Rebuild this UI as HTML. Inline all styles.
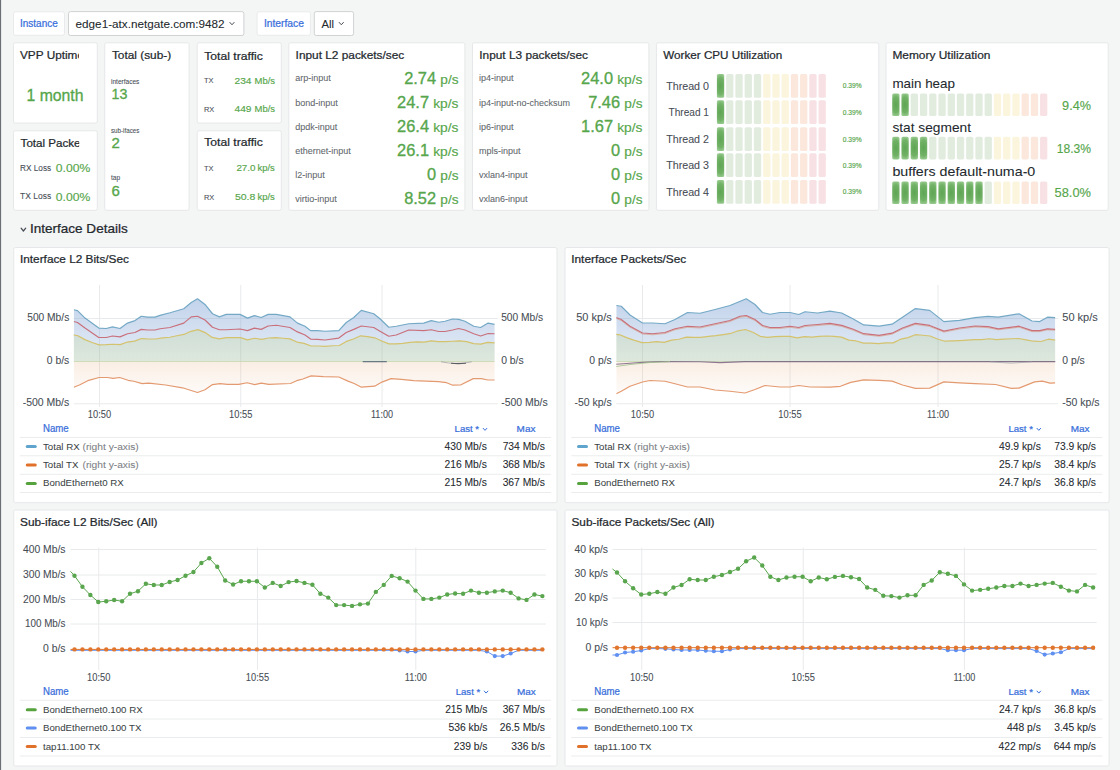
<!DOCTYPE html><html><head><meta charset="utf-8"><style>html,body{margin:0;padding:0;background:#f4f5f5;}svg{display:block;font-family:"Liberation Sans", sans-serif;}</style></head><body>
<svg width="1120" height="770" viewBox="0 0 1120 770">
<rect x="0" y="0" width="1120" height="770" fill="#f4f5f5"/>
<rect x="0" y="0" width="1.1" height="770" fill="#6c6f74"/>
<rect x="13.5" y="11.8" width="51" height="23.5" rx="2" fill="#fff" stroke="#e9eaeb" stroke-width="1"/>
<text x="20.00" y="26.90" font-size="10" fill="#3a6fdb" textLength="37.75" lengthAdjust="spacingAndGlyphs" stroke="#3a6fdb" stroke-width="0.24">Instance</text>
<rect x="68.5" y="11.6" width="175.4" height="23.9" rx="2" fill="#fff" stroke="#cfd1d3" stroke-width="1"/>
<text x="75.60" y="27.80" font-size="11" fill="#24292e" textLength="149.00" lengthAdjust="spacingAndGlyphs" stroke="#24292e" stroke-width="0.07">edge1-atx.netgate.com:9482</text>
<path d="M229.90 22.45 L232.00 24.75 L234.10 22.45" fill="none" stroke="#464c54" stroke-width="1.0" stroke-linecap="round" stroke-linejoin="round"/>
<rect x="257.1" y="11.8" width="53.3" height="23.5" rx="2" fill="#fff" stroke="#e9eaeb" stroke-width="1"/>
<text x="263.90" y="26.90" font-size="10" fill="#3a6fdb" textLength="40.00" lengthAdjust="spacingAndGlyphs" stroke="#3a6fdb" stroke-width="0.24">Interface</text>
<rect x="314.3" y="11.6" width="39.3" height="23.9" rx="2" fill="#fff" stroke="#cfd1d3" stroke-width="1"/>
<text x="321.40" y="27.80" font-size="11" fill="#24292e" textLength="12.50" lengthAdjust="spacingAndGlyphs" stroke="#24292e" stroke-width="0.07">All</text>
<path d="M339.20 22.45 L341.30 24.75 L343.40 22.45" fill="none" stroke="#464c54" stroke-width="1.0" stroke-linecap="round" stroke-linejoin="round"/>
<rect x="13.50" y="42.80" width="83.80" height="80.30" rx="1.8" fill="#ffffff" stroke="#e6e7e9" stroke-width="1"/>
<clipPath id="c_vpp"><rect x="14" y="43" width="65" height="30"/></clipPath>
<text x="20.00" y="59.40" font-size="11.8" fill="#24292e" textLength="64.00" lengthAdjust="spacingAndGlyphs" clip-path="url(#c_vpp)" stroke="#24292e" stroke-width="0.24">VPP Uptime</text>
<text x="26.50" y="101.00" font-size="17" fill="#56a64b" textLength="57.00" lengthAdjust="spacingAndGlyphs" stroke="#56a64b" stroke-width="0.32">1 month</text>
<rect x="13.50" y="130.80" width="83.80" height="79.50" rx="1.8" fill="#ffffff" stroke="#e6e7e9" stroke-width="1"/>
<clipPath id="c_tp"><rect x="14" y="131" width="65.2" height="30"/></clipPath>
<text x="20.60" y="146.50" font-size="11.8" fill="#24292e" textLength="69.00" lengthAdjust="spacingAndGlyphs" clip-path="url(#c_tp)" stroke="#24292e" stroke-width="0.24">Total Packets</text>
<text x="20.00" y="170.60" font-size="8.5" fill="#464c54" textLength="31.20" lengthAdjust="spacingAndGlyphs" stroke="#464c54" stroke-width="0.07">RX Loss</text>
<text x="55.80" y="172.00" font-size="11.5" fill="#56a64b" textLength="34.40" lengthAdjust="spacingAndGlyphs" stroke="#56a64b" stroke-width="0.15">0.00%</text>
<text x="20.00" y="198.80" font-size="8.5" fill="#464c54" textLength="31.20" lengthAdjust="spacingAndGlyphs" stroke="#464c54" stroke-width="0.07">TX Loss</text>
<text x="55.80" y="200.90" font-size="11.5" fill="#56a64b" textLength="34.40" lengthAdjust="spacingAndGlyphs" stroke="#56a64b" stroke-width="0.15">0.00%</text>
<rect x="104.75" y="42.80" width="84.35" height="167.50" rx="1.8" fill="#ffffff" stroke="#e6e7e9" stroke-width="1"/>
<clipPath id="c_ts"><rect x="105" y="43" width="66.2" height="30"/></clipPath>
<text x="111.90" y="59.20" font-size="11.8" fill="#24292e" textLength="110.70" lengthAdjust="spacingAndGlyphs" clip-path="url(#c_ts)" stroke="#24292e" stroke-width="0.24">Total (sub-)interfaces</text>
<text x="111.00" y="83.75" font-size="6.6" fill="#464c54" textLength="28.40" lengthAdjust="spacingAndGlyphs" stroke="#464c54" stroke-width="0.07">interfaces</text>
<text x="111.50" y="99.40" font-size="15" fill="#56a64b" textLength="15.80" lengthAdjust="spacingAndGlyphs" stroke="#56a64b" stroke-width="0.32">13</text>
<text x="111.00" y="132.70" font-size="6.6" fill="#464c54" textLength="28.40" lengthAdjust="spacingAndGlyphs" stroke="#464c54" stroke-width="0.07">sub-ifaces</text>
<text x="111.50" y="147.90" font-size="15" fill="#56a64b" stroke="#56a64b" stroke-width="0.32">2</text>
<text x="111.00" y="180.20" font-size="6.6" fill="#464c54" stroke="#464c54" stroke-width="0.07">tap</text>
<text x="111.50" y="196.00" font-size="15" fill="#56a64b" stroke="#56a64b" stroke-width="0.32">6</text>
<rect x="197.20" y="42.80" width="84.10" height="80.30" rx="1.8" fill="#ffffff" stroke="#e6e7e9" stroke-width="1"/>
<text x="204.30" y="59.50" font-size="11.8" fill="#24292e" textLength="58.50" lengthAdjust="spacingAndGlyphs" stroke="#24292e" stroke-width="0.24">Total traffic</text>
<text x="204.00" y="83.40" font-size="7.4" fill="#464c54" stroke="#464c54" stroke-width="0.07">TX</text>
<text x="234.50" y="83.80" font-size="9.8" fill="#56a64b" textLength="17.00" lengthAdjust="spacingAndGlyphs" stroke="#56a64b" stroke-width="0.15">234</text>
<text x="254.60" y="83.80" font-size="9" fill="#56a64b" textLength="20.50" lengthAdjust="spacingAndGlyphs" stroke="#56a64b" stroke-width="0.15">Mb/s</text>
<text x="204.00" y="112.10" font-size="7.4" fill="#464c54" stroke="#464c54" stroke-width="0.07">RX</text>
<text x="234.50" y="111.60" font-size="9.8" fill="#56a64b" textLength="17.00" lengthAdjust="spacingAndGlyphs" stroke="#56a64b" stroke-width="0.15">449</text>
<text x="254.60" y="111.60" font-size="9" fill="#56a64b" textLength="20.50" lengthAdjust="spacingAndGlyphs" stroke="#56a64b" stroke-width="0.15">Mb/s</text>
<rect x="197.20" y="130.80" width="84.10" height="79.50" rx="1.8" fill="#ffffff" stroke="#e6e7e9" stroke-width="1"/>
<text x="204.30" y="146.40" font-size="11.8" fill="#24292e" textLength="58.50" lengthAdjust="spacingAndGlyphs" stroke="#24292e" stroke-width="0.24">Total traffic</text>
<text x="204.00" y="170.50" font-size="7.4" fill="#464c54" stroke="#464c54" stroke-width="0.07">TX</text>
<text x="236.40" y="171.10" font-size="9.8" fill="#56a64b" textLength="19.20" lengthAdjust="spacingAndGlyphs" stroke="#56a64b" stroke-width="0.15">27.0</text>
<text x="257.50" y="171.10" font-size="8.6" fill="#56a64b" textLength="17.30" lengthAdjust="spacingAndGlyphs" stroke="#56a64b" stroke-width="0.15">kp/s</text>
<text x="204.00" y="199.50" font-size="7.4" fill="#464c54" stroke="#464c54" stroke-width="0.07">RX</text>
<text x="234.90" y="199.50" font-size="9.8" fill="#56a64b" textLength="20.50" lengthAdjust="spacingAndGlyphs" stroke="#56a64b" stroke-width="0.15">50.8</text>
<text x="257.50" y="199.50" font-size="8.6" fill="#56a64b" textLength="17.30" lengthAdjust="spacingAndGlyphs" stroke="#56a64b" stroke-width="0.15">kp/s</text>
<rect x="288.80" y="42.80" width="176.10" height="167.50" rx="1.8" fill="#ffffff" stroke="#e6e7e9" stroke-width="1"/>
<text x="295.60" y="59.20" font-size="11.8" fill="#24292e" textLength="108.70" lengthAdjust="spacingAndGlyphs" stroke="#24292e" stroke-width="0.24">Input L2 packets/sec</text>
<text x="295.30" y="81.40" font-size="9" fill="#62676c" stroke="#62676c" stroke-width="0.07">arp-input</text>
<text x="440.30" y="84.00" font-size="12.5" fill="#56a64b" textLength="18.20" lengthAdjust="spacingAndGlyphs" stroke="#56a64b" stroke-width="0.15">p/s</text>
<text x="436.10" y="84.00" font-size="16.4" fill="#56a64b" text-anchor="end" stroke="#56a64b" stroke-width="0.32">2.74</text>
<text x="295.30" y="105.50" font-size="9" fill="#62676c" stroke="#62676c" stroke-width="0.07">bond-input</text>
<text x="433.20" y="108.10" font-size="12.5" fill="#56a64b" textLength="25.30" lengthAdjust="spacingAndGlyphs" stroke="#56a64b" stroke-width="0.15">kp/s</text>
<text x="429.00" y="108.10" font-size="16.4" fill="#56a64b" text-anchor="end" stroke="#56a64b" stroke-width="0.32">24.7</text>
<text x="295.30" y="129.80" font-size="9" fill="#62676c" stroke="#62676c" stroke-width="0.07">dpdk-input</text>
<text x="433.20" y="132.40" font-size="12.5" fill="#56a64b" textLength="25.30" lengthAdjust="spacingAndGlyphs" stroke="#56a64b" stroke-width="0.15">kp/s</text>
<text x="429.00" y="132.40" font-size="16.4" fill="#56a64b" text-anchor="end" stroke="#56a64b" stroke-width="0.32">26.4</text>
<text x="295.30" y="153.70" font-size="9" fill="#62676c" stroke="#62676c" stroke-width="0.07">ethernet-input</text>
<text x="433.20" y="156.30" font-size="12.5" fill="#56a64b" textLength="25.30" lengthAdjust="spacingAndGlyphs" stroke="#56a64b" stroke-width="0.15">kp/s</text>
<text x="429.00" y="156.30" font-size="16.4" fill="#56a64b" text-anchor="end" stroke="#56a64b" stroke-width="0.32">26.1</text>
<text x="295.30" y="177.50" font-size="9" fill="#62676c" stroke="#62676c" stroke-width="0.07">l2-input</text>
<text x="440.30" y="180.10" font-size="12.5" fill="#56a64b" textLength="18.20" lengthAdjust="spacingAndGlyphs" stroke="#56a64b" stroke-width="0.15">p/s</text>
<text x="436.10" y="180.10" font-size="16.4" fill="#56a64b" text-anchor="end" stroke="#56a64b" stroke-width="0.32">0</text>
<text x="295.30" y="201.60" font-size="9" fill="#62676c" stroke="#62676c" stroke-width="0.07">virtio-input</text>
<text x="440.30" y="204.20" font-size="12.5" fill="#56a64b" textLength="18.20" lengthAdjust="spacingAndGlyphs" stroke="#56a64b" stroke-width="0.15">p/s</text>
<text x="436.10" y="204.20" font-size="16.4" fill="#56a64b" text-anchor="end" stroke="#56a64b" stroke-width="0.32">8.52</text>
<rect x="472.50" y="42.80" width="176.40" height="167.50" rx="1.8" fill="#ffffff" stroke="#e6e7e9" stroke-width="1"/>
<text x="479.30" y="59.20" font-size="11.8" fill="#24292e" textLength="108.70" lengthAdjust="spacingAndGlyphs" stroke="#24292e" stroke-width="0.24">Input L3 packets/sec</text>
<text x="479.00" y="81.40" font-size="9" fill="#62676c" stroke="#62676c" stroke-width="0.07">ip4-input</text>
<text x="617.20" y="84.00" font-size="12.5" fill="#56a64b" textLength="25.30" lengthAdjust="spacingAndGlyphs" stroke="#56a64b" stroke-width="0.15">kp/s</text>
<text x="613.00" y="84.00" font-size="16.4" fill="#56a64b" text-anchor="end" stroke="#56a64b" stroke-width="0.32">24.0</text>
<text x="479.00" y="105.50" font-size="9" fill="#62676c" stroke="#62676c" stroke-width="0.07">ip4-input-no-checksum</text>
<text x="624.30" y="108.10" font-size="12.5" fill="#56a64b" textLength="18.20" lengthAdjust="spacingAndGlyphs" stroke="#56a64b" stroke-width="0.15">p/s</text>
<text x="620.10" y="108.10" font-size="16.4" fill="#56a64b" text-anchor="end" stroke="#56a64b" stroke-width="0.32">7.46</text>
<text x="479.00" y="129.80" font-size="9" fill="#62676c" stroke="#62676c" stroke-width="0.07">ip6-input</text>
<text x="617.20" y="132.40" font-size="12.5" fill="#56a64b" textLength="25.30" lengthAdjust="spacingAndGlyphs" stroke="#56a64b" stroke-width="0.15">kp/s</text>
<text x="613.00" y="132.40" font-size="16.4" fill="#56a64b" text-anchor="end" stroke="#56a64b" stroke-width="0.32">1.67</text>
<text x="479.00" y="153.70" font-size="9" fill="#62676c" stroke="#62676c" stroke-width="0.07">mpls-input</text>
<text x="624.30" y="156.30" font-size="12.5" fill="#56a64b" textLength="18.20" lengthAdjust="spacingAndGlyphs" stroke="#56a64b" stroke-width="0.15">p/s</text>
<text x="620.10" y="156.30" font-size="16.4" fill="#56a64b" text-anchor="end" stroke="#56a64b" stroke-width="0.32">0</text>
<text x="479.00" y="177.50" font-size="9" fill="#62676c" stroke="#62676c" stroke-width="0.07">vxlan4-input</text>
<text x="624.30" y="180.10" font-size="12.5" fill="#56a64b" textLength="18.20" lengthAdjust="spacingAndGlyphs" stroke="#56a64b" stroke-width="0.15">p/s</text>
<text x="620.10" y="180.10" font-size="16.4" fill="#56a64b" text-anchor="end" stroke="#56a64b" stroke-width="0.32">0</text>
<text x="479.00" y="201.60" font-size="9" fill="#62676c" stroke="#62676c" stroke-width="0.07">vxlan6-input</text>
<text x="624.30" y="204.20" font-size="12.5" fill="#56a64b" textLength="18.20" lengthAdjust="spacingAndGlyphs" stroke="#56a64b" stroke-width="0.15">p/s</text>
<text x="620.10" y="204.20" font-size="16.4" fill="#56a64b" text-anchor="end" stroke="#56a64b" stroke-width="0.32">0</text>
<rect x="656.40" y="42.80" width="222.40" height="167.50" rx="1.8" fill="#ffffff" stroke="#e6e7e9" stroke-width="1"/>
<text x="663.30" y="59.20" font-size="11.8" fill="#24292e" textLength="119.00" lengthAdjust="spacingAndGlyphs" stroke="#24292e" stroke-width="0.24">Worker CPU Utilization</text>
<defs><radialGradient id="gfill" cx="0.5" cy="0.5" r="0.5" fx="0.5" fy="0.5" gradientTransform="translate(0.5 0.5) scale(1.6 1) translate(-0.5 -0.5)"><stop offset="0" stop-color="#5ea554"/><stop offset="0.7" stop-color="#72b267"/><stop offset="1" stop-color="#94c88b"/></radialGradient></defs>
<rect x="716.90" y="74.00" width="7.3" height="23.80" rx="1.6" fill="url(#gfill)"/>
<rect x="726.14" y="74.00" width="7.3" height="23.80" rx="1.6" fill="#e1ecdf"/>
<rect x="735.38" y="74.00" width="7.3" height="23.80" rx="1.6" fill="#e1ecdf"/>
<rect x="744.62" y="74.00" width="7.3" height="23.80" rx="1.6" fill="#e1ecdf"/>
<rect x="753.86" y="74.00" width="7.3" height="23.80" rx="1.6" fill="#e1ecdf"/>
<rect x="763.10" y="74.00" width="7.3" height="23.80" rx="1.6" fill="#fbf5dd"/>
<rect x="772.34" y="74.00" width="7.3" height="23.80" rx="1.6" fill="#fbf5dd"/>
<rect x="781.58" y="74.00" width="7.3" height="23.80" rx="1.6" fill="#fbf5dd"/>
<rect x="790.82" y="74.00" width="7.3" height="23.80" rx="1.6" fill="#fbe7dc"/>
<rect x="800.06" y="74.00" width="7.3" height="23.80" rx="1.6" fill="#fbe7dc"/>
<rect x="809.30" y="74.00" width="7.3" height="23.80" rx="1.6" fill="#f8e1e4"/>
<rect x="818.54" y="74.00" width="7.3" height="23.80" rx="1.6" fill="#f8e1e4"/>
<text x="709.00" y="89.50" font-size="10.5" fill="#464c54" text-anchor="end" textLength="42.80" lengthAdjust="spacingAndGlyphs" stroke="#464c54" stroke-width="0.07">Thread 0</text>
<text x="842.80" y="88.30" font-size="6.7" fill="#56a64b" textLength="18.90" lengthAdjust="spacingAndGlyphs" stroke="#56a64b" stroke-width="0.15">0.39%</text>
<rect x="716.90" y="100.20" width="7.3" height="23.80" rx="1.6" fill="url(#gfill)"/>
<rect x="726.14" y="100.20" width="7.3" height="23.80" rx="1.6" fill="#e1ecdf"/>
<rect x="735.38" y="100.20" width="7.3" height="23.80" rx="1.6" fill="#e1ecdf"/>
<rect x="744.62" y="100.20" width="7.3" height="23.80" rx="1.6" fill="#e1ecdf"/>
<rect x="753.86" y="100.20" width="7.3" height="23.80" rx="1.6" fill="#e1ecdf"/>
<rect x="763.10" y="100.20" width="7.3" height="23.80" rx="1.6" fill="#fbf5dd"/>
<rect x="772.34" y="100.20" width="7.3" height="23.80" rx="1.6" fill="#fbf5dd"/>
<rect x="781.58" y="100.20" width="7.3" height="23.80" rx="1.6" fill="#fbf5dd"/>
<rect x="790.82" y="100.20" width="7.3" height="23.80" rx="1.6" fill="#fbe7dc"/>
<rect x="800.06" y="100.20" width="7.3" height="23.80" rx="1.6" fill="#fbe7dc"/>
<rect x="809.30" y="100.20" width="7.3" height="23.80" rx="1.6" fill="#f8e1e4"/>
<rect x="818.54" y="100.20" width="7.3" height="23.80" rx="1.6" fill="#f8e1e4"/>
<text x="709.00" y="115.70" font-size="10.5" fill="#464c54" text-anchor="end" textLength="40.50" lengthAdjust="spacingAndGlyphs" stroke="#464c54" stroke-width="0.07">Thread 1</text>
<text x="842.80" y="114.50" font-size="6.7" fill="#56a64b" textLength="18.90" lengthAdjust="spacingAndGlyphs" stroke="#56a64b" stroke-width="0.15">0.39%</text>
<rect x="716.90" y="127.20" width="7.3" height="23.80" rx="1.6" fill="url(#gfill)"/>
<rect x="726.14" y="127.20" width="7.3" height="23.80" rx="1.6" fill="#e1ecdf"/>
<rect x="735.38" y="127.20" width="7.3" height="23.80" rx="1.6" fill="#e1ecdf"/>
<rect x="744.62" y="127.20" width="7.3" height="23.80" rx="1.6" fill="#e1ecdf"/>
<rect x="753.86" y="127.20" width="7.3" height="23.80" rx="1.6" fill="#e1ecdf"/>
<rect x="763.10" y="127.20" width="7.3" height="23.80" rx="1.6" fill="#fbf5dd"/>
<rect x="772.34" y="127.20" width="7.3" height="23.80" rx="1.6" fill="#fbf5dd"/>
<rect x="781.58" y="127.20" width="7.3" height="23.80" rx="1.6" fill="#fbf5dd"/>
<rect x="790.82" y="127.20" width="7.3" height="23.80" rx="1.6" fill="#fbe7dc"/>
<rect x="800.06" y="127.20" width="7.3" height="23.80" rx="1.6" fill="#fbe7dc"/>
<rect x="809.30" y="127.20" width="7.3" height="23.80" rx="1.6" fill="#f8e1e4"/>
<rect x="818.54" y="127.20" width="7.3" height="23.80" rx="1.6" fill="#f8e1e4"/>
<text x="709.00" y="142.70" font-size="10.5" fill="#464c54" text-anchor="end" textLength="42.80" lengthAdjust="spacingAndGlyphs" stroke="#464c54" stroke-width="0.07">Thread 2</text>
<text x="842.80" y="141.50" font-size="6.7" fill="#56a64b" textLength="18.90" lengthAdjust="spacingAndGlyphs" stroke="#56a64b" stroke-width="0.15">0.39%</text>
<rect x="716.90" y="153.30" width="7.3" height="23.80" rx="1.6" fill="url(#gfill)"/>
<rect x="726.14" y="153.30" width="7.3" height="23.80" rx="1.6" fill="#e1ecdf"/>
<rect x="735.38" y="153.30" width="7.3" height="23.80" rx="1.6" fill="#e1ecdf"/>
<rect x="744.62" y="153.30" width="7.3" height="23.80" rx="1.6" fill="#e1ecdf"/>
<rect x="753.86" y="153.30" width="7.3" height="23.80" rx="1.6" fill="#e1ecdf"/>
<rect x="763.10" y="153.30" width="7.3" height="23.80" rx="1.6" fill="#fbf5dd"/>
<rect x="772.34" y="153.30" width="7.3" height="23.80" rx="1.6" fill="#fbf5dd"/>
<rect x="781.58" y="153.30" width="7.3" height="23.80" rx="1.6" fill="#fbf5dd"/>
<rect x="790.82" y="153.30" width="7.3" height="23.80" rx="1.6" fill="#fbe7dc"/>
<rect x="800.06" y="153.30" width="7.3" height="23.80" rx="1.6" fill="#fbe7dc"/>
<rect x="809.30" y="153.30" width="7.3" height="23.80" rx="1.6" fill="#f8e1e4"/>
<rect x="818.54" y="153.30" width="7.3" height="23.80" rx="1.6" fill="#f8e1e4"/>
<text x="709.00" y="168.80" font-size="10.5" fill="#464c54" text-anchor="end" textLength="42.80" lengthAdjust="spacingAndGlyphs" stroke="#464c54" stroke-width="0.07">Thread 3</text>
<text x="842.80" y="167.60" font-size="6.7" fill="#56a64b" textLength="18.90" lengthAdjust="spacingAndGlyphs" stroke="#56a64b" stroke-width="0.15">0.39%</text>
<rect x="716.90" y="180.00" width="7.3" height="23.80" rx="1.6" fill="url(#gfill)"/>
<rect x="726.14" y="180.00" width="7.3" height="23.80" rx="1.6" fill="#e1ecdf"/>
<rect x="735.38" y="180.00" width="7.3" height="23.80" rx="1.6" fill="#e1ecdf"/>
<rect x="744.62" y="180.00" width="7.3" height="23.80" rx="1.6" fill="#e1ecdf"/>
<rect x="753.86" y="180.00" width="7.3" height="23.80" rx="1.6" fill="#e1ecdf"/>
<rect x="763.10" y="180.00" width="7.3" height="23.80" rx="1.6" fill="#fbf5dd"/>
<rect x="772.34" y="180.00" width="7.3" height="23.80" rx="1.6" fill="#fbf5dd"/>
<rect x="781.58" y="180.00" width="7.3" height="23.80" rx="1.6" fill="#fbf5dd"/>
<rect x="790.82" y="180.00" width="7.3" height="23.80" rx="1.6" fill="#fbe7dc"/>
<rect x="800.06" y="180.00" width="7.3" height="23.80" rx="1.6" fill="#fbe7dc"/>
<rect x="809.30" y="180.00" width="7.3" height="23.80" rx="1.6" fill="#f8e1e4"/>
<rect x="818.54" y="180.00" width="7.3" height="23.80" rx="1.6" fill="#f8e1e4"/>
<text x="709.00" y="195.50" font-size="10.5" fill="#464c54" text-anchor="end" textLength="42.80" lengthAdjust="spacingAndGlyphs" stroke="#464c54" stroke-width="0.07">Thread 4</text>
<text x="842.80" y="194.30" font-size="6.7" fill="#56a64b" textLength="18.90" lengthAdjust="spacingAndGlyphs" stroke="#56a64b" stroke-width="0.15">0.39%</text>
<rect x="886.00" y="42.80" width="222.20" height="167.50" rx="1.8" fill="#ffffff" stroke="#e6e7e9" stroke-width="1"/>
<text x="892.40" y="59.10" font-size="11.8" fill="#24292e" textLength="98.00" lengthAdjust="spacingAndGlyphs" stroke="#24292e" stroke-width="0.24">Memory Utilization</text>
<text x="892.40" y="88.10" font-size="13.3" fill="#24292e" textLength="62.60" lengthAdjust="spacingAndGlyphs" stroke="#24292e" stroke-width="0.07">main heap</text>
<rect x="892.20" y="93.40" width="7.3" height="22.60" rx="1.6" fill="url(#gfill)"/>
<rect x="901.44" y="93.40" width="7.3" height="22.60" rx="1.6" fill="url(#gfill)"/>
<rect x="910.68" y="93.40" width="7.3" height="22.60" rx="1.6" fill="#e1ecdf"/>
<rect x="919.92" y="93.40" width="7.3" height="22.60" rx="1.6" fill="#e1ecdf"/>
<rect x="929.16" y="93.40" width="7.3" height="22.60" rx="1.6" fill="#e1ecdf"/>
<rect x="938.40" y="93.40" width="7.3" height="22.60" rx="1.6" fill="#e1ecdf"/>
<rect x="947.64" y="93.40" width="7.3" height="22.60" rx="1.6" fill="#e1ecdf"/>
<rect x="956.88" y="93.40" width="7.3" height="22.60" rx="1.6" fill="#e1ecdf"/>
<rect x="966.12" y="93.40" width="7.3" height="22.60" rx="1.6" fill="#e1ecdf"/>
<rect x="975.36" y="93.40" width="7.3" height="22.60" rx="1.6" fill="#e1ecdf"/>
<rect x="984.60" y="93.40" width="7.3" height="22.60" rx="1.6" fill="#e1ecdf"/>
<rect x="993.84" y="93.40" width="7.3" height="22.60" rx="1.6" fill="#fbf5dd"/>
<rect x="1003.08" y="93.40" width="7.3" height="22.60" rx="1.6" fill="#fbf5dd"/>
<rect x="1012.32" y="93.40" width="7.3" height="22.60" rx="1.6" fill="#fbf5dd"/>
<rect x="1021.56" y="93.40" width="7.3" height="22.60" rx="1.6" fill="#fbe7dc"/>
<rect x="1030.80" y="93.40" width="7.3" height="22.60" rx="1.6" fill="#fbe7dc"/>
<rect x="1040.04" y="93.40" width="7.3" height="22.60" rx="1.6" fill="#f8e1e4"/>
<text x="1062.10" y="109.50" font-size="13" fill="#56a64b" textLength="28.90" lengthAdjust="spacingAndGlyphs" stroke="#56a64b" stroke-width="0.15">9.4%</text>
<text x="892.40" y="132.00" font-size="13.3" fill="#24292e" textLength="78.60" lengthAdjust="spacingAndGlyphs" stroke="#24292e" stroke-width="0.07">stat segment</text>
<rect x="892.20" y="136.80" width="7.3" height="22.60" rx="1.6" fill="url(#gfill)"/>
<rect x="901.44" y="136.80" width="7.3" height="22.60" rx="1.6" fill="url(#gfill)"/>
<rect x="910.68" y="136.80" width="7.3" height="22.60" rx="1.6" fill="url(#gfill)"/>
<rect x="919.92" y="136.80" width="7.3" height="22.60" rx="1.6" fill="url(#gfill)"/>
<rect x="929.16" y="136.80" width="7.3" height="22.60" rx="1.6" fill="#e1ecdf"/>
<rect x="938.40" y="136.80" width="7.3" height="22.60" rx="1.6" fill="#e1ecdf"/>
<rect x="947.64" y="136.80" width="7.3" height="22.60" rx="1.6" fill="#e1ecdf"/>
<rect x="956.88" y="136.80" width="7.3" height="22.60" rx="1.6" fill="#e1ecdf"/>
<rect x="966.12" y="136.80" width="7.3" height="22.60" rx="1.6" fill="#e1ecdf"/>
<rect x="975.36" y="136.80" width="7.3" height="22.60" rx="1.6" fill="#e1ecdf"/>
<rect x="984.60" y="136.80" width="7.3" height="22.60" rx="1.6" fill="#e1ecdf"/>
<rect x="993.84" y="136.80" width="7.3" height="22.60" rx="1.6" fill="#fbf5dd"/>
<rect x="1003.08" y="136.80" width="7.3" height="22.60" rx="1.6" fill="#fbf5dd"/>
<rect x="1012.32" y="136.80" width="7.3" height="22.60" rx="1.6" fill="#fbf5dd"/>
<rect x="1021.56" y="136.80" width="7.3" height="22.60" rx="1.6" fill="#fbe7dc"/>
<rect x="1030.80" y="136.80" width="7.3" height="22.60" rx="1.6" fill="#fbe7dc"/>
<rect x="1040.04" y="136.80" width="7.3" height="22.60" rx="1.6" fill="#f8e1e4"/>
<text x="1056.70" y="152.90" font-size="13" fill="#56a64b" textLength="34.30" lengthAdjust="spacingAndGlyphs" stroke="#56a64b" stroke-width="0.15">18.3%</text>
<text x="892.40" y="176.40" font-size="13.3" fill="#24292e" textLength="142.90" lengthAdjust="spacingAndGlyphs" stroke="#24292e" stroke-width="0.07">buffers default-numa-0</text>
<rect x="892.20" y="181.40" width="7.3" height="22.60" rx="1.6" fill="url(#gfill)"/>
<rect x="901.44" y="181.40" width="7.3" height="22.60" rx="1.6" fill="url(#gfill)"/>
<rect x="910.68" y="181.40" width="7.3" height="22.60" rx="1.6" fill="url(#gfill)"/>
<rect x="919.92" y="181.40" width="7.3" height="22.60" rx="1.6" fill="url(#gfill)"/>
<rect x="929.16" y="181.40" width="7.3" height="22.60" rx="1.6" fill="url(#gfill)"/>
<rect x="938.40" y="181.40" width="7.3" height="22.60" rx="1.6" fill="url(#gfill)"/>
<rect x="947.64" y="181.40" width="7.3" height="22.60" rx="1.6" fill="url(#gfill)"/>
<rect x="956.88" y="181.40" width="7.3" height="22.60" rx="1.6" fill="url(#gfill)"/>
<rect x="966.12" y="181.40" width="7.3" height="22.60" rx="1.6" fill="url(#gfill)"/>
<rect x="975.36" y="181.40" width="7.3" height="22.60" rx="1.6" fill="url(#gfill)"/>
<rect x="984.60" y="181.40" width="7.3" height="22.60" rx="1.6" fill="#e1ecdf"/>
<rect x="993.84" y="181.40" width="7.3" height="22.60" rx="1.6" fill="#fbf5dd"/>
<rect x="1003.08" y="181.40" width="7.3" height="22.60" rx="1.6" fill="#fbf5dd"/>
<rect x="1012.32" y="181.40" width="7.3" height="22.60" rx="1.6" fill="#fbf5dd"/>
<rect x="1021.56" y="181.40" width="7.3" height="22.60" rx="1.6" fill="#fbe7dc"/>
<rect x="1030.80" y="181.40" width="7.3" height="22.60" rx="1.6" fill="#fbe7dc"/>
<rect x="1040.04" y="181.40" width="7.3" height="22.60" rx="1.6" fill="#f8e1e4"/>
<text x="1054.60" y="197.40" font-size="13" fill="#56a64b" textLength="36.40" lengthAdjust="spacingAndGlyphs" stroke="#56a64b" stroke-width="0.15">58.0%</text>
<path d="M21.10 228.20 L23.40 231.00 L25.70 228.20" fill="none" stroke="#464c54" stroke-width="1.2" stroke-linecap="round" stroke-linejoin="round"/>
<text x="30.00" y="232.70" font-size="13" fill="#24292e" textLength="97.70" lengthAdjust="spacingAndGlyphs" stroke="#24292e" stroke-width="0.24">Interface Details</text>
<defs><linearGradient id="gb1" gradientUnits="userSpaceOnUse" x1="0" y1="285" x2="0" y2="404"><stop offset="0" stop-color="#7a9fd3" stop-opacity="0.52"/><stop offset="1" stop-color="#7a9fd3" stop-opacity="0"/></linearGradient><linearGradient id="gy1" gradientUnits="userSpaceOnUse" x1="0" y1="285" x2="0" y2="404"><stop offset="0" stop-color="#b0cc50" stop-opacity="0.17"/><stop offset="1" stop-color="#b0cc50" stop-opacity="0.15"/></linearGradient><linearGradient id="go1" gradientUnits="userSpaceOnUse" x1="0" y1="285" x2="0" y2="404"><stop offset="0" stop-color="#e2a068" stop-opacity="0.50"/><stop offset="1" stop-color="#e2a068" stop-opacity="0"/></linearGradient></defs>
<rect x="13.75" y="247.50" width="543.25" height="255.20" rx="1.8" fill="#ffffff" stroke="#e6e7e9" stroke-width="1"/>
<rect x="565.00" y="247.50" width="544.10" height="255.20" rx="1.8" fill="#ffffff" stroke="#e6e7e9" stroke-width="1"/>
<rect x="13.75" y="510.00" width="543.25" height="256.00" rx="1.8" fill="#ffffff" stroke="#e6e7e9" stroke-width="1"/>
<rect x="565.00" y="510.00" width="544.10" height="256.00" rx="1.8" fill="#ffffff" stroke="#e6e7e9" stroke-width="1"/>
<text x="20.00" y="263.30" font-size="11.6" fill="#24292e" textLength="108.90" lengthAdjust="spacingAndGlyphs" stroke="#24292e" stroke-width="0.24">Interface L2 Bits/Sec</text>
<text x="571.25" y="263.30" font-size="11.6" fill="#24292e" textLength="115.00" lengthAdjust="spacingAndGlyphs" stroke="#24292e" stroke-width="0.24">Interface Packets/Sec</text>
<text x="20.00" y="526.30" font-size="11.6" fill="#24292e" textLength="137.50" lengthAdjust="spacingAndGlyphs" stroke="#24292e" stroke-width="0.24">Sub-iface L2 Bits/Sec (All)</text>
<text x="571.50" y="526.30" font-size="11.6" fill="#24292e" textLength="143.00" lengthAdjust="spacingAndGlyphs" stroke="#24292e" stroke-width="0.24">Sub-iface Packets/Sec (All)</text>
<path d="M73.75 318.5 H497.75 M73.75 403.75 H497.75" stroke="#e9eaeb" stroke-width="1" fill="none"/>
<path d="M99.50 285 V407 M240.75 285 V407 M382.00 285 V407" stroke="#e9eaeb" stroke-width="1" fill="none"/>
<clipPath id="clip73"><rect x="73.75" y="280" width="421.00" height="130"/></clipPath>
<g clip-path="url(#clip73)">
<path d="M73.75 309.75 L77.50 310.60 L85.00 318.10 L98.75 328.10 L106.25 328.50 L112.50 326.90 L120.00 328.50 L127.50 323.10 L135.00 320.60 L141.25 316.25 L147.50 317.10 L155.00 317.10 L160.00 315.40 L170.00 312.75 L183.75 308.75 L191.25 302.50 L197.50 298.75 L205.00 304.40 L212.50 313.75 L219.40 316.90 L226.25 314.40 L240.00 314.40 L247.50 318.10 L254.40 315.60 L261.25 317.50 L268.10 314.40 L276.25 314.40 L290.00 316.90 L297.50 323.10 L305.00 326.25 L310.60 330.60 L317.50 330.60 L325.00 331.25 L338.75 330.60 L346.25 322.50 L353.75 317.50 L361.25 310.40 L373.75 313.75 L380.00 318.75 L388.75 327.25 L396.25 326.25 L408.75 323.75 L423.75 323.10 L431.25 320.60 L438.75 322.25 L445.00 321.25 L452.50 319.00 L458.75 319.40 L465.00 321.25 L473.75 326.25 L480.60 327.50 L488.10 323.10 L494.75 324.40 L494.75 361.50 L73.75 361.50 Z" fill="url(#gb1)"/>
<path d="M70.82 334.61 L77.89 335.77 L84.96 339.61 L92.02 342.49 L99.09 344.94 L106.16 344.68 L113.22 344.24 L120.29 344.68 L127.36 342.06 L134.42 341.18 L141.49 338.56 L148.56 339.00 L155.63 339.00 L162.69 337.95 L169.76 337.25 L176.83 335.77 L183.89 334.46 L190.96 331.31 L198.03 329.65 L205.09 332.62 L212.16 337.43 L219.23 338.82 L226.30 337.69 L233.36 337.69 L240.43 337.69 L247.50 339.87 L254.56 338.26 L261.63 339.35 L268.70 337.99 L275.76 337.62 L282.83 338.26 L289.90 338.89 L296.96 342.04 L304.03 343.40 L311.10 346.02 L318.17 346.02 L325.23 346.30 L332.30 345.76 L339.37 345.50 L346.43 341.41 L353.50 338.96 L360.57 335.82 L367.63 336.62 L374.70 337.81 L381.77 340.96 L388.84 343.86 L395.90 343.86 L402.97 343.40 L410.04 342.32 L417.10 341.97 L424.17 342.04 L431.24 340.96 L438.30 341.69 L445.37 341.69 L452.44 341.23 L459.50 340.96 L466.57 341.69 L473.64 343.68 L480.71 344.20 L487.77 342.32 L494.84 342.88 L494.84 361.50 L70.82 361.50 Z" fill="url(#gy1)"/>
<path d="M73.75 387.25 L79.40 385.00 L88.75 380.30 L99.10 377.50 L107.50 377.50 L113.10 378.40 L119.70 377.50 L128.10 380.30 L133.75 381.25 L142.20 383.70 L148.75 383.10 L165.60 385.00 L182.50 387.80 L197.50 392.50 L205.00 389.70 L212.50 384.60 L220.00 383.70 L227.50 384.40 L238.75 384.40 L247.20 382.75 L254.70 384.60 L261.25 383.10 L268.75 384.40 L290.50 383.50 L296.70 380.70 L302.90 379.00 L311.10 375.90 L323.40 376.55 L338.80 377.00 L348.00 381.10 L354.20 383.50 L361.40 387.20 L374.70 386.20 L381.90 382.10 L391.10 378.60 L401.40 379.40 L413.70 380.70 L438.40 381.70 L446.60 382.70 L452.75 385.20 L461.00 384.80 L473.30 378.60 L481.50 378.60 L487.70 380.00 L494.75 380.00 L494.75 361.50 L73.75 361.50 Z" fill="url(#go1)"/>
<path d="M73.75 361.5 H494.75" stroke="#c6d8ae" stroke-width="0.8" fill="none"/>
<path d="M73.75 309.75 L77.50 310.60 L85.00 318.10 L98.75 328.10 L106.25 328.50 L112.50 326.90 L120.00 328.50 L127.50 323.10 L135.00 320.60 L141.25 316.25 L147.50 317.10 L155.00 317.10 L160.00 315.40 L170.00 312.75 L183.75 308.75 L191.25 302.50 L197.50 298.75 L205.00 304.40 L212.50 313.75 L219.40 316.90 L226.25 314.40 L240.00 314.40 L247.50 318.10 L254.40 315.60 L261.25 317.50 L268.10 314.40 L276.25 314.40 L290.00 316.90 L297.50 323.10 L305.00 326.25 L310.60 330.60 L317.50 330.60 L325.00 331.25 L338.75 330.60 L346.25 322.50 L353.75 317.50 L361.25 310.40 L373.75 313.75 L380.00 318.75 L388.75 327.25 L396.25 326.25 L408.75 323.75 L423.75 323.10 L431.25 320.60 L438.75 322.25 L445.00 321.25 L452.50 319.00 L458.75 319.40 L465.00 321.25 L473.75 326.25 L480.60 327.50 L488.10 323.10 L494.75 324.40" stroke="#74a9c6" stroke-width="1.2" fill="none" stroke-linejoin="round"/>
<path d="M70.82 334.61 L77.89 335.77 L84.96 339.61 L92.02 342.49 L99.09 344.94 L106.16 344.68 L113.22 344.24 L120.29 344.68 L127.36 342.06 L134.42 341.18 L141.49 338.56 L148.56 339.00 L155.63 339.00 L162.69 337.95 L169.76 337.25 L176.83 335.77 L183.89 334.46 L190.96 331.31 L198.03 329.65 L205.09 332.62 L212.16 337.43 L219.23 338.82 L226.30 337.69 L233.36 337.69 L240.43 337.69 L247.50 339.87 L254.56 338.26 L261.63 339.35 L268.70 337.99 L275.76 337.62 L282.83 338.26 L289.90 338.89 L296.96 342.04 L304.03 343.40 L311.10 346.02 L318.17 346.02 L325.23 346.30 L332.30 345.76 L339.37 345.50 L346.43 341.41 L353.50 338.96 L360.57 335.82 L367.63 336.62 L374.70 337.81 L381.77 340.96 L388.84 343.86 L395.90 343.86 L402.97 343.40 L410.04 342.32 L417.10 341.97 L424.17 342.04 L431.24 340.96 L438.30 341.69 L445.37 341.69 L452.44 341.23 L459.50 340.96 L466.57 341.69 L473.64 343.68 L480.71 344.20 L487.77 342.32 L494.84 342.88" stroke="#d4c26c" stroke-width="1.2" fill="none" stroke-linejoin="round"/>
<path d="M73.75 321.50 L77.50 322.50 L85.00 328.10 L98.75 337.50 L106.25 337.50 L112.50 336.00 L120.00 336.90 L127.50 333.75 L135.00 332.50 L141.25 329.40 L147.50 330.00 L155.00 330.00 L160.00 328.75 L170.00 327.50 L183.75 323.10 L191.25 316.90 L197.50 316.25 L205.00 320.00 L212.50 327.25 L219.40 329.75 L226.25 329.75 L240.00 329.00 L247.50 330.60 L254.40 328.10 L261.25 329.40 L268.10 326.00 L276.25 325.25 L290.00 327.50 L297.50 331.90 L305.00 335.00 L310.60 339.10 L317.50 339.40 L325.00 340.00 L338.75 338.10 L346.25 332.50 L353.75 329.40 L361.25 326.00 L373.75 327.50 L380.00 331.25 L388.75 336.25 L396.25 335.00 L408.75 330.00 L423.75 330.60 L431.25 329.75 L438.75 331.50 L445.00 331.50 L452.50 330.00 L458.75 328.50 L465.00 330.00 L473.75 333.75 L480.60 336.00 L488.10 333.50 L494.75 333.75" stroke="#c9707c" stroke-width="1.2" fill="none" stroke-linejoin="round"/>
<path d="M73.75 387.25 L79.40 385.00 L88.75 380.30 L99.10 377.50 L107.50 377.50 L113.10 378.40 L119.70 377.50 L128.10 380.30 L133.75 381.25 L142.20 383.70 L148.75 383.10 L165.60 385.00 L182.50 387.80 L197.50 392.50 L205.00 389.70 L212.50 384.60 L220.00 383.70 L227.50 384.40 L238.75 384.40 L247.20 382.75 L254.70 384.60 L261.25 383.10 L268.75 384.40 L290.50 383.50 L296.70 380.70 L302.90 379.00 L311.10 375.90 L323.40 376.55 L338.80 377.00 L348.00 381.10 L354.20 383.50 L361.40 387.20 L374.70 386.20 L381.90 382.10 L391.10 378.60 L401.40 379.40 L413.70 380.70 L438.40 381.70 L446.60 382.70 L452.75 385.20 L461.00 384.80 L473.30 378.60 L481.50 378.60 L487.70 380.00 L494.75 380.00" stroke="#e49a70" stroke-width="1.2" fill="none" stroke-linejoin="round"/>
</g>
<text x="69.25" y="321.10" font-size="10" fill="#464c54" text-anchor="end" textLength="42.00" lengthAdjust="spacingAndGlyphs" stroke="#464c54" stroke-width="0.07">500 Mb/s</text>
<text x="501.20" y="321.10" font-size="10" fill="#464c54" textLength="42.00" lengthAdjust="spacingAndGlyphs" stroke="#464c54" stroke-width="0.07">500 Mb/s</text>
<text x="69.25" y="364.25" font-size="10" fill="#464c54" text-anchor="end" textLength="22.50" lengthAdjust="spacingAndGlyphs" stroke="#464c54" stroke-width="0.07">0 b/s</text>
<text x="501.20" y="364.25" font-size="10" fill="#464c54" textLength="22.50" lengthAdjust="spacingAndGlyphs" stroke="#464c54" stroke-width="0.07">0 b/s</text>
<text x="69.25" y="406.30" font-size="10" fill="#464c54" text-anchor="end" textLength="46.50" lengthAdjust="spacingAndGlyphs" stroke="#464c54" stroke-width="0.07">-500 Mb/s</text>
<text x="501.20" y="406.30" font-size="10" fill="#464c54" textLength="46.50" lengthAdjust="spacingAndGlyphs" stroke="#464c54" stroke-width="0.07">-500 Mb/s</text>
<text x="99.50" y="418.00" font-size="10.2" fill="#464c54" text-anchor="middle" textLength="23.30" lengthAdjust="spacingAndGlyphs" stroke="#464c54" stroke-width="0.07">10:50</text>
<text x="240.75" y="418.00" font-size="10.2" fill="#464c54" text-anchor="middle" textLength="23.30" lengthAdjust="spacingAndGlyphs" stroke="#464c54" stroke-width="0.07">10:55</text>
<text x="382.00" y="418.00" font-size="10.2" fill="#464c54" text-anchor="middle" textLength="22.00" lengthAdjust="spacingAndGlyphs" stroke="#464c54" stroke-width="0.07">11:00</text>
<path d="M616.25 318.5 H1058.30 M616.25 403.75 H1058.30" stroke="#e9eaeb" stroke-width="1" fill="none"/>
<path d="M642.50 285 V407 M790.00 285 V407 M938.00 285 V407" stroke="#e9eaeb" stroke-width="1" fill="none"/>
<clipPath id="clip616"><rect x="616.25" y="280" width="439.05" height="130"/></clipPath>
<g clip-path="url(#clip616)">
<path d="M616.25 305.50 L621.25 306.25 L630.00 315.00 L642.50 323.00 L652.50 323.00 L665.00 323.75 L675.00 319.50 L687.50 312.50 L700.00 313.25 L715.00 309.50 L730.00 305.50 L746.25 298.75 L755.00 304.50 L762.50 312.50 L770.00 314.25 L780.00 312.50 L790.00 312.50 L798.75 314.50 L805.00 311.75 L817.50 313.00 L830.00 311.20 L841.65 313.00 L853.30 319.00 L863.70 324.90 L879.20 326.20 L892.10 324.15 L902.50 317.20 L915.40 308.60 L929.70 310.40 L943.90 321.60 L959.50 320.30 L975.00 317.70 L988.00 316.40 L998.30 317.20 L1019.00 313.80 L1032.00 321.00 L1039.70 321.60 L1047.50 317.20 L1055.30 317.70 L1055.30 361.50 L616.25 361.50 Z" fill="url(#gb1)"/>
<path d="M612.46 333.86 L619.84 334.80 L627.23 337.90 L634.62 340.39 L642.01 342.61 L649.39 342.34 L656.78 341.72 L664.17 342.34 L671.56 340.12 L678.94 339.24 L686.33 337.19 L693.72 337.46 L701.11 337.46 L708.49 336.31 L715.88 335.68 L723.27 334.62 L730.66 333.46 L738.04 330.80 L745.43 329.47 L752.82 332.31 L760.21 336.31 L767.59 337.46 L774.98 336.57 L782.37 336.31 L789.76 336.31 L797.14 337.90 L804.53 336.57 L811.92 337.19 L819.31 336.36 L826.69 336.00 L834.08 336.47 L841.47 337.10 L848.86 340.12 L856.24 340.96 L863.63 343.07 L871.02 343.18 L878.41 343.71 L885.79 342.89 L893.18 342.89 L900.57 339.20 L907.96 337.64 L915.34 334.69 L922.73 335.26 L930.12 336.00 L937.51 339.02 L944.89 341.22 L952.28 340.96 L959.67 340.58 L967.06 340.12 L974.44 339.59 L981.83 339.59 L989.22 338.74 L996.61 339.59 L1003.99 339.20 L1011.38 338.74 L1018.77 338.49 L1026.16 339.86 L1033.54 341.22 L1040.93 341.51 L1048.32 339.20 L1055.71 340.12 L1055.71 361.50 L612.46 361.50 Z" fill="url(#gy1)"/>
<path d="M616.25 393.75 L621.25 391.25 L630.00 386.25 L642.50 382.00 L650.00 380.50 L665.00 381.25 L675.00 383.75 L687.50 387.00 L700.00 387.00 L715.00 390.00 L730.00 391.25 L745.00 393.00 L755.00 389.50 L765.00 385.50 L780.00 387.00 L790.00 387.00 L798.75 385.50 L810.00 387.00 L830.00 387.10 L840.40 386.30 L850.70 382.40 L863.70 379.80 L879.20 380.30 L892.10 381.10 L902.50 385.00 L915.40 388.40 L929.70 388.10 L943.90 381.90 L959.50 382.90 L975.00 383.70 L995.70 384.50 L1011.25 388.40 L1019.00 388.10 L1034.60 381.90 L1042.30 381.10 L1050.10 383.20 L1055.30 382.90 L1055.30 361.50 L616.25 361.50 Z" fill="url(#go1)"/>
<path d="M616.25 361.5 H1055.30" stroke="#c6d8ae" stroke-width="0.8" fill="none"/>
<path d="M616.25 305.50 L621.25 306.25 L630.00 315.00 L642.50 323.00 L652.50 323.00 L665.00 323.75 L675.00 319.50 L687.50 312.50 L700.00 313.25 L715.00 309.50 L730.00 305.50 L746.25 298.75 L755.00 304.50 L762.50 312.50 L770.00 314.25 L780.00 312.50 L790.00 312.50 L798.75 314.50 L805.00 311.75 L817.50 313.00 L830.00 311.20 L841.65 313.00 L853.30 319.00 L863.70 324.90 L879.20 326.20 L892.10 324.15 L902.50 317.20 L915.40 308.60 L929.70 310.40 L943.90 321.60 L959.50 320.30 L975.00 317.70 L988.00 316.40 L998.30 317.20 L1019.00 313.80 L1032.00 321.00 L1039.70 321.60 L1047.50 317.20 L1055.30 317.70" stroke="#74a9c6" stroke-width="1.2" fill="none" stroke-linejoin="round"/>
<path d="M612.46 333.86 L619.84 334.80 L627.23 337.90 L634.62 340.39 L642.01 342.61 L649.39 342.34 L656.78 341.72 L664.17 342.34 L671.56 340.12 L678.94 339.24 L686.33 337.19 L693.72 337.46 L701.11 337.46 L708.49 336.31 L715.88 335.68 L723.27 334.62 L730.66 333.46 L738.04 330.80 L745.43 329.47 L752.82 332.31 L760.21 336.31 L767.59 337.46 L774.98 336.57 L782.37 336.31 L789.76 336.31 L797.14 337.90 L804.53 336.57 L811.92 337.19 L819.31 336.36 L826.69 336.00 L834.08 336.47 L841.47 337.10 L848.86 340.12 L856.24 340.96 L863.63 343.07 L871.02 343.18 L878.41 343.71 L885.79 342.89 L893.18 342.89 L900.57 339.20 L907.96 337.64 L915.34 334.69 L922.73 335.26 L930.12 336.00 L937.51 339.02 L944.89 341.22 L952.28 340.96 L959.67 340.58 L967.06 340.12 L974.44 339.59 L981.83 339.59 L989.22 338.74 L996.61 339.59 L1003.99 339.20 L1011.38 338.74 L1018.77 338.49 L1026.16 339.86 L1033.54 341.22 L1040.93 341.51 L1048.32 339.20 L1055.71 340.12" stroke="#d4c26c" stroke-width="1.2" fill="none" stroke-linejoin="round"/>
<path d="M616.25 317.50 L621.25 319.50 L630.00 326.25 L642.50 333.00 L652.50 333.75 L665.00 332.50 L675.00 328.75 L687.50 326.25 L700.00 327.00 L715.00 323.75 L730.00 320.50 L740.00 316.25 L746.25 315.50 L755.00 319.50 L762.50 325.50 L770.00 327.50 L780.00 327.50 L790.00 326.25 L798.75 327.50 L805.00 325.50 L817.50 324.50 L830.00 323.40 L841.65 325.40 L853.30 329.30 L863.70 333.70 L879.20 335.30 L892.10 333.20 L902.50 328.00 L915.40 323.40 L929.70 325.45 L943.90 331.10 L959.50 328.00 L975.00 326.00 L988.00 326.70 L998.30 328.80 L1019.00 326.20 L1032.00 330.60 L1039.70 330.60 L1047.50 328.80 L1055.30 329.30" stroke="#c9707c" stroke-width="1.2" fill="none" stroke-linejoin="round"/>
<path d="M616.25 393.75 L621.25 391.25 L630.00 386.25 L642.50 382.00 L650.00 380.50 L665.00 381.25 L675.00 383.75 L687.50 387.00 L700.00 387.00 L715.00 390.00 L730.00 391.25 L745.00 393.00 L755.00 389.50 L765.00 385.50 L780.00 387.00 L790.00 387.00 L798.75 385.50 L810.00 387.00 L830.00 387.10 L840.40 386.30 L850.70 382.40 L863.70 379.80 L879.20 380.30 L892.10 381.10 L902.50 385.00 L915.40 388.40 L929.70 388.10 L943.90 381.90 L959.50 382.90 L975.00 383.70 L995.70 384.50 L1011.25 388.40 L1019.00 388.10 L1034.60 381.90 L1042.30 381.10 L1050.10 383.20 L1055.30 382.90" stroke="#e49a70" stroke-width="1.2" fill="none" stroke-linejoin="round"/>
</g>
<text x="611.75" y="321.10" font-size="10" fill="#464c54" text-anchor="end" textLength="35.50" lengthAdjust="spacingAndGlyphs" stroke="#464c54" stroke-width="0.07">50 kp/s</text>
<text x="1062.30" y="321.10" font-size="10" fill="#464c54" textLength="35.50" lengthAdjust="spacingAndGlyphs" stroke="#464c54" stroke-width="0.07">50 kp/s</text>
<text x="611.75" y="364.25" font-size="10" fill="#464c54" text-anchor="end" textLength="22.50" lengthAdjust="spacingAndGlyphs" stroke="#464c54" stroke-width="0.07">0 p/s</text>
<text x="1062.30" y="364.25" font-size="10" fill="#464c54" textLength="22.50" lengthAdjust="spacingAndGlyphs" stroke="#464c54" stroke-width="0.07">0 p/s</text>
<text x="611.75" y="406.30" font-size="10" fill="#464c54" text-anchor="end" textLength="37.25" lengthAdjust="spacingAndGlyphs" stroke="#464c54" stroke-width="0.07">-50 kp/s</text>
<text x="1062.30" y="406.30" font-size="10" fill="#464c54" textLength="37.25" lengthAdjust="spacingAndGlyphs" stroke="#464c54" stroke-width="0.07">-50 kp/s</text>
<text x="642.50" y="418.00" font-size="10.2" fill="#464c54" text-anchor="middle" textLength="23.30" lengthAdjust="spacingAndGlyphs" stroke="#464c54" stroke-width="0.07">10:50</text>
<text x="790.00" y="418.00" font-size="10.2" fill="#464c54" text-anchor="middle" textLength="23.30" lengthAdjust="spacingAndGlyphs" stroke="#464c54" stroke-width="0.07">10:55</text>
<text x="938.00" y="418.00" font-size="10.2" fill="#464c54" text-anchor="middle" textLength="22.00" lengthAdjust="spacingAndGlyphs" stroke="#464c54" stroke-width="0.07">11:00</text>
<clipPath id="c2x"><rect x="616.25" y="280" width="439" height="130"/></clipPath>
<path d="M616.25 318.50 L621.25 320.50 L630.00 327.25 L642.50 334.00 L652.50 334.75 L665.00 333.50 L675.00 329.75 L687.50 327.25 L700.00 328.00 L715.00 324.75 L730.00 321.50 L740.00 317.25 L746.25 316.50 L755.00 320.50 L762.50 326.50 L770.00 328.50 L780.00 328.50 L790.00 327.25 L798.75 328.50 L805.00 326.50 L817.50 325.50 L830.00 324.40 L841.65 326.40 L853.30 330.30 L863.70 334.70 L879.20 336.30 L892.10 334.20 L902.50 329.00 L915.40 324.40 L929.70 326.45 L943.90 332.10 L959.50 329.00 L975.00 327.00 L988.00 327.70 L998.30 329.80 L1019.00 327.20 L1032.00 331.60 L1039.70 331.60 L1047.50 329.80 L1055.30 330.30" stroke="#d9825f" stroke-width="0.9" fill="none" opacity="0.55" clip-path="url(#c2x)"/>
<path d="M362.7 361.7 L386.8 361.7" stroke="#3b4a6a" stroke-width="1.1" fill="none" opacity="0.8"/>
<path d="M441 361.8 Q456.4 365 471.8 361.8" stroke="#8a8f9a" stroke-width="1" fill="none" opacity="0.6"/><path d="M451 363.2 Q458 364 466 363.2" stroke="#3f4450" stroke-width="1.1" fill="none" opacity="0.8"/>
<path d="M616.25 364.3 L630 363.2 L642.5 362.4 L660 361.6 L700 361.8 L720 362.6 L745 361.6 L1055.3 361.6" stroke="#6b4f7a" stroke-width="1.1" fill="none" opacity="0.75"/>
<path d="M990 361.8 Q1011 364.6 1032 361.8" stroke="#9a9ea6" stroke-width="1" fill="none" opacity="0.6"/>
<path d="M616.25 366.5 L630 364.5 L650 362.5 L670 361.6" stroke="#9fc28a" stroke-width="1" fill="none" opacity="0.8"/>
<text x="43.00" y="431.75" font-size="10.2" fill="#3a6fdb" textLength="25.75" lengthAdjust="spacingAndGlyphs" stroke="#3a6fdb" stroke-width="0.24">Name</text>
<text x="454.60" y="431.75" font-size="9.6" fill="#3a6fdb" textLength="24.50" lengthAdjust="spacingAndGlyphs" stroke="#3a6fdb" stroke-width="0.24">Last *</text>
<path d="M483.20 428.35 L485.00 430.35 L486.80 428.35" fill="none" stroke="#3a6fdb" stroke-width="1.0" stroke-linecap="round" stroke-linejoin="round"/>
<text x="516.60" y="431.75" font-size="9.6" fill="#3a6fdb" textLength="18.80" lengthAdjust="spacingAndGlyphs" stroke="#3a6fdb" stroke-width="0.24">Max</text>
<path d="M20.00 437.50 H551.00 M20.00 455.75 H551.00 M20.00 474.25 H551.00 M20.00 492.50 H551.00" stroke="#ebeced" stroke-width="1" fill="none"/>
<rect x="25.75" y="445.10" width="11" height="3" rx="1.5" fill="#5ea4cc"/>
<text x="43.00" y="449.50" font-size="9.7" fill="#3a3f44" stroke="#3a3f44" stroke-width="0.04">Total RX</text>
<text x="82.50" y="449.50" font-size="9.7" fill="#7d8185" textLength="56.25" lengthAdjust="spacingAndGlyphs" stroke="#7d8185" stroke-width="0.07">(right y-axis)</text>
<text x="486.80" y="449.50" font-size="10.3" fill="#24292e" text-anchor="end" stroke="#24292e" stroke-width="0.07">430 Mb/s</text>
<text x="545.00" y="449.50" font-size="10.3" fill="#24292e" text-anchor="end" stroke="#24292e" stroke-width="0.07">734 Mb/s</text>
<rect x="25.75" y="463.60" width="11" height="3" rx="1.5" fill="#e0702a"/>
<text x="43.00" y="468.00" font-size="9.7" fill="#3a3f44" stroke="#3a3f44" stroke-width="0.04">Total TX</text>
<text x="82.50" y="468.00" font-size="9.7" fill="#7d8185" textLength="56.25" lengthAdjust="spacingAndGlyphs" stroke="#7d8185" stroke-width="0.07">(right y-axis)</text>
<text x="486.80" y="468.00" font-size="10.3" fill="#24292e" text-anchor="end" stroke="#24292e" stroke-width="0.07">216 Mb/s</text>
<text x="545.00" y="468.00" font-size="10.3" fill="#24292e" text-anchor="end" stroke="#24292e" stroke-width="0.07">368 Mb/s</text>
<rect x="25.75" y="481.90" width="11" height="3" rx="1.5" fill="#56a33e"/>
<text x="43.00" y="486.30" font-size="9.7" fill="#3a3f44" stroke="#3a3f44" stroke-width="0.04">BondEthernet0 RX</text>
<text x="486.80" y="486.30" font-size="10.3" fill="#24292e" text-anchor="end" stroke="#24292e" stroke-width="0.07">215 Mb/s</text>
<text x="545.00" y="486.30" font-size="10.3" fill="#24292e" text-anchor="end" stroke="#24292e" stroke-width="0.07">367 Mb/s</text>
<text x="594.25" y="431.75" font-size="10.2" fill="#3a6fdb" textLength="25.75" lengthAdjust="spacingAndGlyphs" stroke="#3a6fdb" stroke-width="0.24">Name</text>
<text x="1008.40" y="431.75" font-size="9.6" fill="#3a6fdb" textLength="24.50" lengthAdjust="spacingAndGlyphs" stroke="#3a6fdb" stroke-width="0.24">Last *</text>
<path d="M1037.00 428.35 L1038.80 430.35 L1040.60 428.35" fill="none" stroke="#3a6fdb" stroke-width="1.0" stroke-linecap="round" stroke-linejoin="round"/>
<text x="1070.70" y="431.75" font-size="9.6" fill="#3a6fdb" textLength="18.80" lengthAdjust="spacingAndGlyphs" stroke="#3a6fdb" stroke-width="0.24">Max</text>
<path d="M571.25 437.50 H1102.50 M571.25 455.75 H1102.50 M571.25 474.25 H1102.50 M571.25 492.50 H1102.50" stroke="#ebeced" stroke-width="1" fill="none"/>
<rect x="577.00" y="445.10" width="11" height="3" rx="1.5" fill="#5ea4cc"/>
<text x="594.25" y="449.50" font-size="9.7" fill="#3a3f44" stroke="#3a3f44" stroke-width="0.04">Total RX</text>
<text x="633.75" y="449.50" font-size="9.7" fill="#7d8185" textLength="56.25" lengthAdjust="spacingAndGlyphs" stroke="#7d8185" stroke-width="0.07">(right y-axis)</text>
<text x="1040.80" y="449.50" font-size="10.3" fill="#24292e" text-anchor="end" stroke="#24292e" stroke-width="0.07">49.9 kp/s</text>
<text x="1096.00" y="449.50" font-size="10.3" fill="#24292e" text-anchor="end" stroke="#24292e" stroke-width="0.07">73.9 kp/s</text>
<rect x="577.00" y="463.60" width="11" height="3" rx="1.5" fill="#e0702a"/>
<text x="594.25" y="468.00" font-size="9.7" fill="#3a3f44" stroke="#3a3f44" stroke-width="0.04">Total TX</text>
<text x="633.75" y="468.00" font-size="9.7" fill="#7d8185" textLength="56.25" lengthAdjust="spacingAndGlyphs" stroke="#7d8185" stroke-width="0.07">(right y-axis)</text>
<text x="1040.80" y="468.00" font-size="10.3" fill="#24292e" text-anchor="end" stroke="#24292e" stroke-width="0.07">25.7 kp/s</text>
<text x="1096.00" y="468.00" font-size="10.3" fill="#24292e" text-anchor="end" stroke="#24292e" stroke-width="0.07">38.4 kp/s</text>
<rect x="577.00" y="481.90" width="11" height="3" rx="1.5" fill="#56a33e"/>
<text x="594.25" y="486.30" font-size="9.7" fill="#3a3f44" stroke="#3a3f44" stroke-width="0.04">BondEthernet0 RX</text>
<text x="1040.80" y="486.30" font-size="10.3" fill="#24292e" text-anchor="end" stroke="#24292e" stroke-width="0.07">24.7 kp/s</text>
<text x="1096.00" y="486.30" font-size="10.3" fill="#24292e" text-anchor="end" stroke="#24292e" stroke-width="0.07">36.8 kp/s</text>
<path d="M70.50 549.50 H545.80 M70.50 575.00 H545.80 M70.50 599.50 H545.80 M70.50 624.00 H545.80" stroke="#e9eaeb" stroke-width="1" fill="none"/>
<path d="M98.75 547.5 V670 M257.50 547.5 V670 M415.80 547.5 V670" stroke="#e9eaeb" stroke-width="1" fill="none"/>
<path d="M70.50 650.30 L74.50 650.30 L82.43 650.30 L90.36 650.30 L98.29 650.30 L106.22 650.30 L114.15 650.30 L122.08 650.30 L130.01 650.30 L137.94 650.30 L145.87 650.30 L153.80 650.30 L161.73 650.30 L169.66 650.30 L177.59 650.30 L185.52 650.30 L193.45 650.30 L201.38 650.30 L209.31 650.30 L217.24 650.30 L225.17 650.30 L233.10 650.30 L241.03 650.30 L248.96 650.30 L256.89 650.30 L264.82 650.30 L272.75 650.30 L280.68 650.30 L288.61 650.30 L296.54 650.30 L304.47 650.30 L312.40 650.30 L320.33 650.30 L328.26 650.30 L336.19 650.30 L344.12 650.30 L352.05 650.30 L359.98 650.30 L367.91 650.30 L375.84 650.30 L383.77 650.30 L391.70 650.30 L399.63 650.50 L407.56 651.50 L415.49 651.50 L423.42 650.30 L431.35 650.30 L439.28 650.30 L447.21 650.30 L455.14 650.30 L463.07 650.30 L471.00 650.30 L478.93 650.30 L486.86 651.50 L494.79 656.10 L502.72 656.10 L510.65 653.50 L518.58 650.30 L526.51 650.30 L534.44 650.30 L542.37 650.30" stroke="#5f8ff0" stroke-width="1" fill="none"/>
<circle cx="399.63" cy="650.50" r="2.1" fill="#5f8ff0"/>
<circle cx="407.56" cy="651.50" r="2.1" fill="#5f8ff0"/>
<circle cx="415.49" cy="651.50" r="2.1" fill="#5f8ff0"/>
<circle cx="486.86" cy="651.50" r="2.1" fill="#5f8ff0"/>
<circle cx="494.79" cy="656.10" r="2.1" fill="#5f8ff0"/>
<circle cx="502.72" cy="656.10" r="2.1" fill="#5f8ff0"/>
<circle cx="510.65" cy="653.50" r="2.1" fill="#5f8ff0"/>
<path d="M70.50 649.4 H542.37" stroke="#e0752d" stroke-width="1" fill="none"/>
<circle cx="74.50" cy="649.4" r="2.2" fill="#e0752d"/><circle cx="82.43" cy="649.4" r="2.2" fill="#e0752d"/><circle cx="90.36" cy="649.4" r="2.2" fill="#e0752d"/><circle cx="98.29" cy="649.4" r="2.2" fill="#e0752d"/><circle cx="106.22" cy="649.4" r="2.2" fill="#e0752d"/><circle cx="114.15" cy="649.4" r="2.2" fill="#e0752d"/><circle cx="122.08" cy="649.4" r="2.2" fill="#e0752d"/><circle cx="130.01" cy="649.4" r="2.2" fill="#e0752d"/><circle cx="137.94" cy="649.4" r="2.2" fill="#e0752d"/><circle cx="145.87" cy="649.4" r="2.2" fill="#e0752d"/><circle cx="153.80" cy="649.4" r="2.2" fill="#e0752d"/><circle cx="161.73" cy="649.4" r="2.2" fill="#e0752d"/><circle cx="169.66" cy="649.4" r="2.2" fill="#e0752d"/><circle cx="177.59" cy="649.4" r="2.2" fill="#e0752d"/><circle cx="185.52" cy="649.4" r="2.2" fill="#e0752d"/><circle cx="193.45" cy="649.4" r="2.2" fill="#e0752d"/><circle cx="201.38" cy="649.4" r="2.2" fill="#e0752d"/><circle cx="209.31" cy="649.4" r="2.2" fill="#e0752d"/><circle cx="217.24" cy="649.4" r="2.2" fill="#e0752d"/><circle cx="225.17" cy="649.4" r="2.2" fill="#e0752d"/><circle cx="233.10" cy="649.4" r="2.2" fill="#e0752d"/><circle cx="241.03" cy="649.4" r="2.2" fill="#e0752d"/><circle cx="248.96" cy="649.4" r="2.2" fill="#e0752d"/><circle cx="256.89" cy="649.4" r="2.2" fill="#e0752d"/><circle cx="264.82" cy="649.4" r="2.2" fill="#e0752d"/><circle cx="272.75" cy="649.4" r="2.2" fill="#e0752d"/><circle cx="280.68" cy="649.4" r="2.2" fill="#e0752d"/><circle cx="288.61" cy="649.4" r="2.2" fill="#e0752d"/><circle cx="296.54" cy="649.4" r="2.2" fill="#e0752d"/><circle cx="304.47" cy="649.4" r="2.2" fill="#e0752d"/><circle cx="312.40" cy="649.4" r="2.2" fill="#e0752d"/><circle cx="320.33" cy="649.4" r="2.2" fill="#e0752d"/><circle cx="328.26" cy="649.4" r="2.2" fill="#e0752d"/><circle cx="336.19" cy="649.4" r="2.2" fill="#e0752d"/><circle cx="344.12" cy="649.4" r="2.2" fill="#e0752d"/><circle cx="352.05" cy="649.4" r="2.2" fill="#e0752d"/><circle cx="359.98" cy="649.4" r="2.2" fill="#e0752d"/><circle cx="367.91" cy="649.4" r="2.2" fill="#e0752d"/><circle cx="375.84" cy="649.4" r="2.2" fill="#e0752d"/><circle cx="383.77" cy="649.4" r="2.2" fill="#e0752d"/><circle cx="391.70" cy="649.4" r="2.2" fill="#e0752d"/><circle cx="399.63" cy="649.4" r="2.2" fill="#e0752d"/><circle cx="407.56" cy="649.4" r="2.2" fill="#e0752d"/><circle cx="415.49" cy="649.4" r="2.2" fill="#e0752d"/><circle cx="423.42" cy="649.4" r="2.2" fill="#e0752d"/><circle cx="431.35" cy="649.4" r="2.2" fill="#e0752d"/><circle cx="439.28" cy="649.4" r="2.2" fill="#e0752d"/><circle cx="447.21" cy="649.4" r="2.2" fill="#e0752d"/><circle cx="455.14" cy="649.4" r="2.2" fill="#e0752d"/><circle cx="463.07" cy="649.4" r="2.2" fill="#e0752d"/><circle cx="471.00" cy="649.4" r="2.2" fill="#e0752d"/><circle cx="478.93" cy="649.4" r="2.2" fill="#e0752d"/><circle cx="486.86" cy="649.4" r="2.2" fill="#e0752d"/><circle cx="494.79" cy="649.4" r="2.2" fill="#e0752d"/><circle cx="502.72" cy="649.4" r="2.2" fill="#e0752d"/><circle cx="510.65" cy="649.4" r="2.2" fill="#e0752d"/><circle cx="518.58" cy="649.4" r="2.2" fill="#e0752d"/><circle cx="526.51" cy="649.4" r="2.2" fill="#e0752d"/><circle cx="534.44" cy="649.4" r="2.2" fill="#e0752d"/><circle cx="542.37" cy="649.4" r="2.2" fill="#e0752d"/>
<path d="M70.50 571.35 L74.50 575.75 L82.43 586.75 L90.36 595.00 L98.29 602.00 L106.22 601.25 L114.15 600.00 L122.08 601.25 L130.01 593.75 L137.94 591.25 L145.87 583.75 L153.80 585.00 L161.73 585.00 L169.66 582.00 L177.59 580.00 L185.52 575.75 L193.45 572.00 L201.38 563.00 L209.31 558.25 L217.24 566.75 L225.17 580.50 L233.10 584.50 L241.03 581.25 L248.96 581.25 L256.89 581.25 L264.82 587.50 L272.75 582.90 L280.68 586.00 L288.61 582.10 L296.54 581.05 L304.47 582.90 L312.40 584.70 L320.33 593.70 L328.26 597.60 L336.19 605.10 L344.12 605.10 L352.05 605.90 L359.98 604.35 L367.91 603.60 L375.84 591.90 L383.77 584.90 L391.70 575.90 L399.63 578.20 L407.56 581.60 L415.49 590.60 L423.42 598.90 L431.35 598.90 L439.28 597.60 L447.21 594.50 L455.14 593.50 L463.07 593.70 L471.00 590.60 L478.93 592.70 L486.86 592.70 L494.79 591.40 L502.72 590.60 L510.65 592.70 L518.58 598.40 L526.51 599.90 L534.44 594.50 L542.37 596.10" stroke="#5aa64e" stroke-width="1" fill="none" stroke-linejoin="round"/>
<circle cx="74.50" cy="575.75" r="2.2" fill="#5aa64e"/><circle cx="82.43" cy="586.75" r="2.2" fill="#5aa64e"/><circle cx="90.36" cy="595.00" r="2.2" fill="#5aa64e"/><circle cx="98.29" cy="602.00" r="2.2" fill="#5aa64e"/><circle cx="106.22" cy="601.25" r="2.2" fill="#5aa64e"/><circle cx="114.15" cy="600.00" r="2.2" fill="#5aa64e"/><circle cx="122.08" cy="601.25" r="2.2" fill="#5aa64e"/><circle cx="130.01" cy="593.75" r="2.2" fill="#5aa64e"/><circle cx="137.94" cy="591.25" r="2.2" fill="#5aa64e"/><circle cx="145.87" cy="583.75" r="2.2" fill="#5aa64e"/><circle cx="153.80" cy="585.00" r="2.2" fill="#5aa64e"/><circle cx="161.73" cy="585.00" r="2.2" fill="#5aa64e"/><circle cx="169.66" cy="582.00" r="2.2" fill="#5aa64e"/><circle cx="177.59" cy="580.00" r="2.2" fill="#5aa64e"/><circle cx="185.52" cy="575.75" r="2.2" fill="#5aa64e"/><circle cx="193.45" cy="572.00" r="2.2" fill="#5aa64e"/><circle cx="201.38" cy="563.00" r="2.2" fill="#5aa64e"/><circle cx="209.31" cy="558.25" r="2.2" fill="#5aa64e"/><circle cx="217.24" cy="566.75" r="2.2" fill="#5aa64e"/><circle cx="225.17" cy="580.50" r="2.2" fill="#5aa64e"/><circle cx="233.10" cy="584.50" r="2.2" fill="#5aa64e"/><circle cx="241.03" cy="581.25" r="2.2" fill="#5aa64e"/><circle cx="248.96" cy="581.25" r="2.2" fill="#5aa64e"/><circle cx="256.89" cy="581.25" r="2.2" fill="#5aa64e"/><circle cx="264.82" cy="587.50" r="2.2" fill="#5aa64e"/><circle cx="272.75" cy="582.90" r="2.2" fill="#5aa64e"/><circle cx="280.68" cy="586.00" r="2.2" fill="#5aa64e"/><circle cx="288.61" cy="582.10" r="2.2" fill="#5aa64e"/><circle cx="296.54" cy="581.05" r="2.2" fill="#5aa64e"/><circle cx="304.47" cy="582.90" r="2.2" fill="#5aa64e"/><circle cx="312.40" cy="584.70" r="2.2" fill="#5aa64e"/><circle cx="320.33" cy="593.70" r="2.2" fill="#5aa64e"/><circle cx="328.26" cy="597.60" r="2.2" fill="#5aa64e"/><circle cx="336.19" cy="605.10" r="2.2" fill="#5aa64e"/><circle cx="344.12" cy="605.10" r="2.2" fill="#5aa64e"/><circle cx="352.05" cy="605.90" r="2.2" fill="#5aa64e"/><circle cx="359.98" cy="604.35" r="2.2" fill="#5aa64e"/><circle cx="367.91" cy="603.60" r="2.2" fill="#5aa64e"/><circle cx="375.84" cy="591.90" r="2.2" fill="#5aa64e"/><circle cx="383.77" cy="584.90" r="2.2" fill="#5aa64e"/><circle cx="391.70" cy="575.90" r="2.2" fill="#5aa64e"/><circle cx="399.63" cy="578.20" r="2.2" fill="#5aa64e"/><circle cx="407.56" cy="581.60" r="2.2" fill="#5aa64e"/><circle cx="415.49" cy="590.60" r="2.2" fill="#5aa64e"/><circle cx="423.42" cy="598.90" r="2.2" fill="#5aa64e"/><circle cx="431.35" cy="598.90" r="2.2" fill="#5aa64e"/><circle cx="439.28" cy="597.60" r="2.2" fill="#5aa64e"/><circle cx="447.21" cy="594.50" r="2.2" fill="#5aa64e"/><circle cx="455.14" cy="593.50" r="2.2" fill="#5aa64e"/><circle cx="463.07" cy="593.70" r="2.2" fill="#5aa64e"/><circle cx="471.00" cy="590.60" r="2.2" fill="#5aa64e"/><circle cx="478.93" cy="592.70" r="2.2" fill="#5aa64e"/><circle cx="486.86" cy="592.70" r="2.2" fill="#5aa64e"/><circle cx="494.79" cy="591.40" r="2.2" fill="#5aa64e"/><circle cx="502.72" cy="590.60" r="2.2" fill="#5aa64e"/><circle cx="510.65" cy="592.70" r="2.2" fill="#5aa64e"/><circle cx="518.58" cy="598.40" r="2.2" fill="#5aa64e"/><circle cx="526.51" cy="599.90" r="2.2" fill="#5aa64e"/><circle cx="534.44" cy="594.50" r="2.2" fill="#5aa64e"/><circle cx="542.37" cy="596.10" r="2.2" fill="#5aa64e"/>
<text x="65.50" y="553.00" font-size="10" fill="#464c54" text-anchor="end" textLength="42.50" lengthAdjust="spacingAndGlyphs" stroke="#464c54" stroke-width="0.07">400 Mb/s</text>
<text x="65.50" y="578.20" font-size="10" fill="#464c54" text-anchor="end" textLength="42.50" lengthAdjust="spacingAndGlyphs" stroke="#464c54" stroke-width="0.07">300 Mb/s</text>
<text x="65.50" y="602.60" font-size="10" fill="#464c54" text-anchor="end" textLength="42.50" lengthAdjust="spacingAndGlyphs" stroke="#464c54" stroke-width="0.07">200 Mb/s</text>
<text x="65.50" y="627.20" font-size="10" fill="#464c54" text-anchor="end" textLength="40.50" lengthAdjust="spacingAndGlyphs" stroke="#464c54" stroke-width="0.07">100 Mb/s</text>
<text x="65.50" y="652.40" font-size="10" fill="#464c54" text-anchor="end" textLength="22.50" lengthAdjust="spacingAndGlyphs" stroke="#464c54" stroke-width="0.07">0 b/s</text>
<text x="98.75" y="680.80" font-size="10.2" fill="#464c54" text-anchor="middle" textLength="23.30" lengthAdjust="spacingAndGlyphs" stroke="#464c54" stroke-width="0.07">10:50</text>
<text x="257.50" y="680.80" font-size="10.2" fill="#464c54" text-anchor="middle" textLength="23.30" lengthAdjust="spacingAndGlyphs" stroke="#464c54" stroke-width="0.07">10:55</text>
<text x="415.80" y="680.80" font-size="10.2" fill="#464c54" text-anchor="middle" textLength="22.00" lengthAdjust="spacingAndGlyphs" stroke="#464c54" stroke-width="0.07">11:00</text>
<path d="M612.50 549.50 H1096.70 M612.50 574.00 H1096.70 M612.50 598.00 H1096.70 M612.50 622.50 H1096.70" stroke="#e9eaeb" stroke-width="1" fill="none"/>
<path d="M641.75 547.5 V670 M803.25 547.5 V670 M964.40 547.5 V670" stroke="#e9eaeb" stroke-width="1" fill="none"/>
<path d="M612.50 655.00 L617.00 655.00 L625.07 652.50 L633.14 651.75 L641.21 650.50 L649.28 648.60 L657.35 648.60 L665.42 648.80 L673.49 649.50 L681.56 650.00 L689.63 650.00 L697.70 650.00 L705.77 650.75 L713.84 651.25 L721.91 651.25 L729.98 649.50 L738.05 648.60 L746.12 648.60 L754.19 648.60 L762.26 648.60 L770.33 648.60 L778.40 648.60 L786.47 648.60 L794.54 648.60 L802.61 648.60 L810.68 648.60 L818.75 648.60 L826.82 648.60 L834.89 648.60 L842.96 648.60 L851.03 648.60 L859.10 648.60 L867.17 648.60 L875.24 648.60 L883.31 648.60 L891.38 648.60 L899.45 648.60 L907.52 648.60 L915.59 648.60 L923.66 648.60 L931.73 648.60 L939.80 648.60 L947.87 650.20 L955.94 650.20 L964.01 650.20 L972.08 648.60 L980.15 648.60 L988.22 648.60 L996.29 648.60 L1004.36 648.60 L1012.43 648.60 L1020.50 648.60 L1028.57 648.60 L1036.64 651.00 L1044.71 654.60 L1052.78 653.50 L1060.85 652.25 L1068.92 648.60 L1076.99 648.60 L1085.06 648.60 L1093.13 648.60" stroke="#5f8ff0" stroke-width="1" fill="none"/>
<circle cx="617.00" cy="655.00" r="2.1" fill="#5f8ff0"/>
<circle cx="625.07" cy="652.50" r="2.1" fill="#5f8ff0"/>
<circle cx="633.14" cy="651.75" r="2.1" fill="#5f8ff0"/>
<circle cx="641.21" cy="650.50" r="2.1" fill="#5f8ff0"/>
<circle cx="665.42" cy="648.80" r="2.1" fill="#5f8ff0"/>
<circle cx="673.49" cy="649.50" r="2.1" fill="#5f8ff0"/>
<circle cx="681.56" cy="650.00" r="2.1" fill="#5f8ff0"/>
<circle cx="689.63" cy="650.00" r="2.1" fill="#5f8ff0"/>
<circle cx="697.70" cy="650.00" r="2.1" fill="#5f8ff0"/>
<circle cx="705.77" cy="650.75" r="2.1" fill="#5f8ff0"/>
<circle cx="713.84" cy="651.25" r="2.1" fill="#5f8ff0"/>
<circle cx="721.91" cy="651.25" r="2.1" fill="#5f8ff0"/>
<circle cx="729.98" cy="649.50" r="2.1" fill="#5f8ff0"/>
<circle cx="947.87" cy="650.20" r="2.1" fill="#5f8ff0"/>
<circle cx="955.94" cy="650.20" r="2.1" fill="#5f8ff0"/>
<circle cx="964.01" cy="650.20" r="2.1" fill="#5f8ff0"/>
<circle cx="1036.64" cy="651.00" r="2.1" fill="#5f8ff0"/>
<circle cx="1044.71" cy="654.60" r="2.1" fill="#5f8ff0"/>
<circle cx="1052.78" cy="653.50" r="2.1" fill="#5f8ff0"/>
<circle cx="1060.85" cy="652.25" r="2.1" fill="#5f8ff0"/>
<path d="M612.50 647.7 H1093.13" stroke="#e0752d" stroke-width="1" fill="none"/>
<circle cx="617.00" cy="647.7" r="2.2" fill="#e0752d"/><circle cx="625.07" cy="647.7" r="2.2" fill="#e0752d"/><circle cx="633.14" cy="647.7" r="2.2" fill="#e0752d"/><circle cx="641.21" cy="647.7" r="2.2" fill="#e0752d"/><circle cx="649.28" cy="647.7" r="2.2" fill="#e0752d"/><circle cx="657.35" cy="647.7" r="2.2" fill="#e0752d"/><circle cx="665.42" cy="647.7" r="2.2" fill="#e0752d"/><circle cx="673.49" cy="647.7" r="2.2" fill="#e0752d"/><circle cx="681.56" cy="647.7" r="2.2" fill="#e0752d"/><circle cx="689.63" cy="647.7" r="2.2" fill="#e0752d"/><circle cx="697.70" cy="647.7" r="2.2" fill="#e0752d"/><circle cx="705.77" cy="647.7" r="2.2" fill="#e0752d"/><circle cx="713.84" cy="647.7" r="2.2" fill="#e0752d"/><circle cx="721.91" cy="647.7" r="2.2" fill="#e0752d"/><circle cx="729.98" cy="647.7" r="2.2" fill="#e0752d"/><circle cx="738.05" cy="647.7" r="2.2" fill="#e0752d"/><circle cx="746.12" cy="647.7" r="2.2" fill="#e0752d"/><circle cx="754.19" cy="647.7" r="2.2" fill="#e0752d"/><circle cx="762.26" cy="647.7" r="2.2" fill="#e0752d"/><circle cx="770.33" cy="647.7" r="2.2" fill="#e0752d"/><circle cx="778.40" cy="647.7" r="2.2" fill="#e0752d"/><circle cx="786.47" cy="647.7" r="2.2" fill="#e0752d"/><circle cx="794.54" cy="647.7" r="2.2" fill="#e0752d"/><circle cx="802.61" cy="647.7" r="2.2" fill="#e0752d"/><circle cx="810.68" cy="647.7" r="2.2" fill="#e0752d"/><circle cx="818.75" cy="647.7" r="2.2" fill="#e0752d"/><circle cx="826.82" cy="647.7" r="2.2" fill="#e0752d"/><circle cx="834.89" cy="647.7" r="2.2" fill="#e0752d"/><circle cx="842.96" cy="647.7" r="2.2" fill="#e0752d"/><circle cx="851.03" cy="647.7" r="2.2" fill="#e0752d"/><circle cx="859.10" cy="647.7" r="2.2" fill="#e0752d"/><circle cx="867.17" cy="647.7" r="2.2" fill="#e0752d"/><circle cx="875.24" cy="647.7" r="2.2" fill="#e0752d"/><circle cx="883.31" cy="647.7" r="2.2" fill="#e0752d"/><circle cx="891.38" cy="647.7" r="2.2" fill="#e0752d"/><circle cx="899.45" cy="647.7" r="2.2" fill="#e0752d"/><circle cx="907.52" cy="647.7" r="2.2" fill="#e0752d"/><circle cx="915.59" cy="647.7" r="2.2" fill="#e0752d"/><circle cx="923.66" cy="647.7" r="2.2" fill="#e0752d"/><circle cx="931.73" cy="647.7" r="2.2" fill="#e0752d"/><circle cx="939.80" cy="647.7" r="2.2" fill="#e0752d"/><circle cx="947.87" cy="647.7" r="2.2" fill="#e0752d"/><circle cx="955.94" cy="647.7" r="2.2" fill="#e0752d"/><circle cx="964.01" cy="647.7" r="2.2" fill="#e0752d"/><circle cx="972.08" cy="647.7" r="2.2" fill="#e0752d"/><circle cx="980.15" cy="647.7" r="2.2" fill="#e0752d"/><circle cx="988.22" cy="647.7" r="2.2" fill="#e0752d"/><circle cx="996.29" cy="647.7" r="2.2" fill="#e0752d"/><circle cx="1004.36" cy="647.7" r="2.2" fill="#e0752d"/><circle cx="1012.43" cy="647.7" r="2.2" fill="#e0752d"/><circle cx="1020.50" cy="647.7" r="2.2" fill="#e0752d"/><circle cx="1028.57" cy="647.7" r="2.2" fill="#e0752d"/><circle cx="1036.64" cy="647.7" r="2.2" fill="#e0752d"/><circle cx="1044.71" cy="647.7" r="2.2" fill="#e0752d"/><circle cx="1052.78" cy="647.7" r="2.2" fill="#e0752d"/><circle cx="1060.85" cy="647.7" r="2.2" fill="#e0752d"/><circle cx="1068.92" cy="647.7" r="2.2" fill="#e0752d"/><circle cx="1076.99" cy="647.7" r="2.2" fill="#e0752d"/><circle cx="1085.06" cy="647.7" r="2.2" fill="#e0752d"/><circle cx="1093.13" cy="647.7" r="2.2" fill="#e0752d"/>
<path d="M612.50 569.00 L617.00 572.50 L625.07 581.25 L633.14 588.25 L641.21 594.50 L649.28 593.75 L657.35 592.00 L665.42 593.75 L673.49 587.50 L681.56 585.00 L689.63 579.25 L697.70 580.00 L705.77 580.00 L713.84 576.75 L721.91 575.00 L729.98 572.00 L738.05 568.75 L746.12 561.25 L754.19 557.50 L762.26 565.50 L770.33 576.75 L778.40 580.00 L786.47 577.50 L794.54 576.75 L802.61 576.75 L810.68 581.25 L818.75 577.50 L826.82 579.25 L834.89 576.90 L842.96 575.90 L851.03 577.20 L859.10 579.00 L867.17 587.50 L875.24 589.85 L883.31 595.80 L891.38 596.10 L899.45 597.60 L907.52 595.30 L915.59 595.30 L923.66 584.90 L931.73 580.50 L939.80 572.20 L947.87 573.80 L955.94 575.90 L964.01 584.40 L972.08 590.60 L980.15 589.85 L988.22 588.80 L996.29 587.50 L1004.36 586.00 L1012.43 586.00 L1020.50 583.60 L1028.57 586.00 L1036.64 584.90 L1044.71 583.60 L1052.78 582.90 L1060.85 586.75 L1068.92 590.60 L1076.99 591.40 L1085.06 584.90 L1093.13 587.50" stroke="#5aa64e" stroke-width="1" fill="none" stroke-linejoin="round"/>
<circle cx="617.00" cy="572.50" r="2.2" fill="#5aa64e"/><circle cx="625.07" cy="581.25" r="2.2" fill="#5aa64e"/><circle cx="633.14" cy="588.25" r="2.2" fill="#5aa64e"/><circle cx="641.21" cy="594.50" r="2.2" fill="#5aa64e"/><circle cx="649.28" cy="593.75" r="2.2" fill="#5aa64e"/><circle cx="657.35" cy="592.00" r="2.2" fill="#5aa64e"/><circle cx="665.42" cy="593.75" r="2.2" fill="#5aa64e"/><circle cx="673.49" cy="587.50" r="2.2" fill="#5aa64e"/><circle cx="681.56" cy="585.00" r="2.2" fill="#5aa64e"/><circle cx="689.63" cy="579.25" r="2.2" fill="#5aa64e"/><circle cx="697.70" cy="580.00" r="2.2" fill="#5aa64e"/><circle cx="705.77" cy="580.00" r="2.2" fill="#5aa64e"/><circle cx="713.84" cy="576.75" r="2.2" fill="#5aa64e"/><circle cx="721.91" cy="575.00" r="2.2" fill="#5aa64e"/><circle cx="729.98" cy="572.00" r="2.2" fill="#5aa64e"/><circle cx="738.05" cy="568.75" r="2.2" fill="#5aa64e"/><circle cx="746.12" cy="561.25" r="2.2" fill="#5aa64e"/><circle cx="754.19" cy="557.50" r="2.2" fill="#5aa64e"/><circle cx="762.26" cy="565.50" r="2.2" fill="#5aa64e"/><circle cx="770.33" cy="576.75" r="2.2" fill="#5aa64e"/><circle cx="778.40" cy="580.00" r="2.2" fill="#5aa64e"/><circle cx="786.47" cy="577.50" r="2.2" fill="#5aa64e"/><circle cx="794.54" cy="576.75" r="2.2" fill="#5aa64e"/><circle cx="802.61" cy="576.75" r="2.2" fill="#5aa64e"/><circle cx="810.68" cy="581.25" r="2.2" fill="#5aa64e"/><circle cx="818.75" cy="577.50" r="2.2" fill="#5aa64e"/><circle cx="826.82" cy="579.25" r="2.2" fill="#5aa64e"/><circle cx="834.89" cy="576.90" r="2.2" fill="#5aa64e"/><circle cx="842.96" cy="575.90" r="2.2" fill="#5aa64e"/><circle cx="851.03" cy="577.20" r="2.2" fill="#5aa64e"/><circle cx="859.10" cy="579.00" r="2.2" fill="#5aa64e"/><circle cx="867.17" cy="587.50" r="2.2" fill="#5aa64e"/><circle cx="875.24" cy="589.85" r="2.2" fill="#5aa64e"/><circle cx="883.31" cy="595.80" r="2.2" fill="#5aa64e"/><circle cx="891.38" cy="596.10" r="2.2" fill="#5aa64e"/><circle cx="899.45" cy="597.60" r="2.2" fill="#5aa64e"/><circle cx="907.52" cy="595.30" r="2.2" fill="#5aa64e"/><circle cx="915.59" cy="595.30" r="2.2" fill="#5aa64e"/><circle cx="923.66" cy="584.90" r="2.2" fill="#5aa64e"/><circle cx="931.73" cy="580.50" r="2.2" fill="#5aa64e"/><circle cx="939.80" cy="572.20" r="2.2" fill="#5aa64e"/><circle cx="947.87" cy="573.80" r="2.2" fill="#5aa64e"/><circle cx="955.94" cy="575.90" r="2.2" fill="#5aa64e"/><circle cx="964.01" cy="584.40" r="2.2" fill="#5aa64e"/><circle cx="972.08" cy="590.60" r="2.2" fill="#5aa64e"/><circle cx="980.15" cy="589.85" r="2.2" fill="#5aa64e"/><circle cx="988.22" cy="588.80" r="2.2" fill="#5aa64e"/><circle cx="996.29" cy="587.50" r="2.2" fill="#5aa64e"/><circle cx="1004.36" cy="586.00" r="2.2" fill="#5aa64e"/><circle cx="1012.43" cy="586.00" r="2.2" fill="#5aa64e"/><circle cx="1020.50" cy="583.60" r="2.2" fill="#5aa64e"/><circle cx="1028.57" cy="586.00" r="2.2" fill="#5aa64e"/><circle cx="1036.64" cy="584.90" r="2.2" fill="#5aa64e"/><circle cx="1044.71" cy="583.60" r="2.2" fill="#5aa64e"/><circle cx="1052.78" cy="582.90" r="2.2" fill="#5aa64e"/><circle cx="1060.85" cy="586.75" r="2.2" fill="#5aa64e"/><circle cx="1068.92" cy="590.60" r="2.2" fill="#5aa64e"/><circle cx="1076.99" cy="591.40" r="2.2" fill="#5aa64e"/><circle cx="1085.06" cy="584.90" r="2.2" fill="#5aa64e"/><circle cx="1093.13" cy="587.50" r="2.2" fill="#5aa64e"/>
<text x="608.00" y="552.70" font-size="10" fill="#464c54" text-anchor="end" textLength="33.50" lengthAdjust="spacingAndGlyphs" stroke="#464c54" stroke-width="0.07">40 kp/s</text>
<text x="608.00" y="577.20" font-size="10" fill="#464c54" text-anchor="end" textLength="33.50" lengthAdjust="spacingAndGlyphs" stroke="#464c54" stroke-width="0.07">30 kp/s</text>
<text x="608.00" y="601.20" font-size="10" fill="#464c54" text-anchor="end" textLength="33.50" lengthAdjust="spacingAndGlyphs" stroke="#464c54" stroke-width="0.07">20 kp/s</text>
<text x="608.00" y="625.70" font-size="10" fill="#464c54" text-anchor="end" textLength="32.00" lengthAdjust="spacingAndGlyphs" stroke="#464c54" stroke-width="0.07">10 kp/s</text>
<text x="608.00" y="650.90" font-size="10" fill="#464c54" text-anchor="end" textLength="22.50" lengthAdjust="spacingAndGlyphs" stroke="#464c54" stroke-width="0.07">0 p/s</text>
<text x="641.75" y="680.80" font-size="10.2" fill="#464c54" text-anchor="middle" textLength="23.30" lengthAdjust="spacingAndGlyphs" stroke="#464c54" stroke-width="0.07">10:50</text>
<text x="803.25" y="680.80" font-size="10.2" fill="#464c54" text-anchor="middle" textLength="23.30" lengthAdjust="spacingAndGlyphs" stroke="#464c54" stroke-width="0.07">10:55</text>
<text x="964.40" y="680.80" font-size="10.2" fill="#464c54" text-anchor="middle" textLength="22.00" lengthAdjust="spacingAndGlyphs" stroke="#464c54" stroke-width="0.07">11:00</text>
<text x="43.00" y="694.50" font-size="10.2" fill="#3a6fdb" textLength="25.75" lengthAdjust="spacingAndGlyphs" stroke="#3a6fdb" stroke-width="0.24">Name</text>
<text x="455.70" y="694.50" font-size="9.6" fill="#3a6fdb" textLength="24.50" lengthAdjust="spacingAndGlyphs" stroke="#3a6fdb" stroke-width="0.24">Last *</text>
<path d="M484.30 691.10 L486.10 693.10 L487.90 691.10" fill="none" stroke="#3a6fdb" stroke-width="1.0" stroke-linecap="round" stroke-linejoin="round"/>
<text x="516.90" y="694.50" font-size="9.6" fill="#3a6fdb" textLength="18.80" lengthAdjust="spacingAndGlyphs" stroke="#3a6fdb" stroke-width="0.24">Max</text>
<path d="M20.00 700.25 H551.00 M20.00 719.00 H551.00 M20.00 737.50 H551.00 M20.00 756.00 H551.00" stroke="#ebeced" stroke-width="1" fill="none"/>
<rect x="25.75" y="708.35" width="11" height="3" rx="1.5" fill="#56a33e"/>
<text x="43.00" y="712.75" font-size="9.7" fill="#3a3f44" stroke="#3a3f44" stroke-width="0.04">BondEthernet0.100 RX</text>
<text x="487.50" y="712.75" font-size="10.3" fill="#24292e" text-anchor="end" stroke="#24292e" stroke-width="0.07">215 Mb/s</text>
<text x="545.00" y="712.75" font-size="10.3" fill="#24292e" text-anchor="end" stroke="#24292e" stroke-width="0.07">367 Mb/s</text>
<rect x="25.75" y="726.60" width="11" height="3" rx="1.5" fill="#5f8ff0"/>
<text x="43.00" y="731.00" font-size="9.7" fill="#3a3f44" stroke="#3a3f44" stroke-width="0.04">BondEthernet0.100 TX</text>
<text x="487.50" y="731.00" font-size="10.3" fill="#24292e" text-anchor="end" stroke="#24292e" stroke-width="0.07">536 kb/s</text>
<text x="545.00" y="731.00" font-size="10.3" fill="#24292e" text-anchor="end" stroke="#24292e" stroke-width="0.07">26.5 Mb/s</text>
<rect x="25.75" y="745.10" width="11" height="3" rx="1.5" fill="#e0702a"/>
<text x="43.00" y="749.50" font-size="9.7" fill="#3a3f44" stroke="#3a3f44" stroke-width="0.04">tap11.100 TX</text>
<text x="487.50" y="749.50" font-size="10.3" fill="#24292e" text-anchor="end" stroke="#24292e" stroke-width="0.07">239 b/s</text>
<text x="545.00" y="749.50" font-size="10.3" fill="#24292e" text-anchor="end" stroke="#24292e" stroke-width="0.07">336 b/s</text>
<text x="594.25" y="694.50" font-size="10.2" fill="#3a6fdb" textLength="25.75" lengthAdjust="spacingAndGlyphs" stroke="#3a6fdb" stroke-width="0.24">Name</text>
<text x="1008.40" y="694.50" font-size="9.6" fill="#3a6fdb" textLength="24.50" lengthAdjust="spacingAndGlyphs" stroke="#3a6fdb" stroke-width="0.24">Last *</text>
<path d="M1037.00 691.10 L1038.80 693.10 L1040.60 691.10" fill="none" stroke="#3a6fdb" stroke-width="1.0" stroke-linecap="round" stroke-linejoin="round"/>
<text x="1070.70" y="694.50" font-size="9.6" fill="#3a6fdb" textLength="18.80" lengthAdjust="spacingAndGlyphs" stroke="#3a6fdb" stroke-width="0.24">Max</text>
<path d="M571.25 700.25 H1102.50 M571.25 719.00 H1102.50 M571.25 737.50 H1102.50 M571.25 756.00 H1102.50" stroke="#ebeced" stroke-width="1" fill="none"/>
<rect x="577.00" y="708.35" width="11" height="3" rx="1.5" fill="#56a33e"/>
<text x="594.25" y="712.75" font-size="9.7" fill="#3a3f44" stroke="#3a3f44" stroke-width="0.04">BondEthernet0.100 RX</text>
<text x="1040.80" y="712.75" font-size="10.3" fill="#24292e" text-anchor="end" stroke="#24292e" stroke-width="0.07">24.7 kp/s</text>
<text x="1096.00" y="712.75" font-size="10.3" fill="#24292e" text-anchor="end" stroke="#24292e" stroke-width="0.07">36.8 kp/s</text>
<rect x="577.00" y="726.60" width="11" height="3" rx="1.5" fill="#5f8ff0"/>
<text x="594.25" y="731.00" font-size="9.7" fill="#3a3f44" stroke="#3a3f44" stroke-width="0.04">BondEthernet0.100 TX</text>
<text x="1040.80" y="731.00" font-size="10.3" fill="#24292e" text-anchor="end" stroke="#24292e" stroke-width="0.07">448 p/s</text>
<text x="1096.00" y="731.00" font-size="10.3" fill="#24292e" text-anchor="end" stroke="#24292e" stroke-width="0.07">3.45 kp/s</text>
<rect x="577.00" y="745.10" width="11" height="3" rx="1.5" fill="#e0702a"/>
<text x="594.25" y="749.50" font-size="9.7" fill="#3a3f44" stroke="#3a3f44" stroke-width="0.04">tap11.100 TX</text>
<text x="1040.80" y="749.50" font-size="10.3" fill="#24292e" text-anchor="end" stroke="#24292e" stroke-width="0.07">422 mp/s</text>
<text x="1096.00" y="749.50" font-size="10.3" fill="#24292e" text-anchor="end" stroke="#24292e" stroke-width="0.07">644 mp/s</text>
</svg></body></html>
